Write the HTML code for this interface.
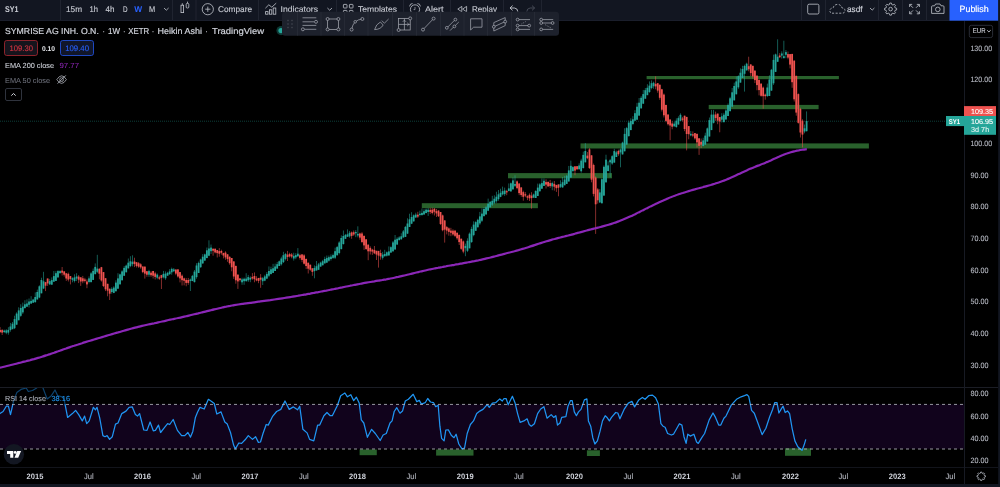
<!DOCTYPE html>
<html><head><meta charset="utf-8"><title>SY1 chart</title>
<style>html,body{margin:0;padding:0;background:#000;overflow:hidden}svg{display:block;will-change:transform;opacity:0.999}</style></head>
<body>
<svg width="1000" height="487" viewBox="0 0 1000 487" font-family="Liberation Sans, sans-serif" text-rendering="geometricPrecision">
<rect width="1000" height="487" fill="#000"/>
<rect x="0" y="404.4" width="964" height="44.4" fill="#12041d"/>
<line x1="0" y1="121.2" x2="946" y2="121.2" stroke="#26a69a" stroke-width="0.7" stroke-dasharray="1 1" opacity="0.55"/>
<rect x="421.8" y="203.2" width="116.1" height="5.0" fill="#2a622d"/>
<rect x="508" y="173.1" width="104.0" height="5.2" fill="#2a622d"/>
<rect x="580.5" y="143.4" width="288.4" height="5.1" fill="#2a622d"/>
<rect x="646.6" y="76.0" width="192.3" height="3.2" fill="#2a622d"/>
<rect x="708.7" y="104.9" width="109.9" height="4.3" fill="#2a622d"/>
<rect x="359.6" y="449.5" width="17.2" height="5.7" fill="#2a622d"/>
<rect x="436.1" y="449.5" width="37.4" height="6.1" fill="#2a622d"/>
<rect x="586.9" y="450.3" width="13.0" height="5.7" fill="#2a622d"/>
<rect x="785" y="448.3" width="26.0" height="7.5" fill="#2a622d"/>
<rect x="-0.37" y="327.1" width="0.9" height="6.0" fill="#ef5350" opacity="0.62"/>
<rect x="1.70" y="329.1" width="0.9" height="5.9" fill="#ef5350" opacity="0.62"/>
<rect x="3.77" y="329.6" width="0.9" height="3.5" fill="#26a69a" opacity="0.62"/>
<rect x="5.83" y="329.2" width="0.9" height="5.0" fill="#26a69a" opacity="0.62"/>
<rect x="7.90" y="327.2" width="0.9" height="7.5" fill="#26a69a" opacity="0.62"/>
<rect x="9.97" y="322.9" width="0.9" height="8.8" fill="#26a69a" opacity="0.62"/>
<rect x="12.04" y="322.0" width="0.9" height="7.2" fill="#26a69a" opacity="0.62"/>
<rect x="14.11" y="315.7" width="0.9" height="13.4" fill="#26a69a" opacity="0.62"/>
<rect x="16.17" y="312.3" width="0.9" height="12.4" fill="#26a69a" opacity="0.62"/>
<rect x="18.24" y="307.3" width="0.9" height="12.9" fill="#26a69a" opacity="0.62"/>
<rect x="20.31" y="304.3" width="0.9" height="12.5" fill="#26a69a" opacity="0.62"/>
<rect x="22.38" y="302.6" width="0.9" height="11.3" fill="#26a69a" opacity="0.62"/>
<rect x="24.45" y="300.2" width="0.9" height="8.6" fill="#26a69a" opacity="0.62"/>
<rect x="26.51" y="299.4" width="0.9" height="7.3" fill="#26a69a" opacity="0.62"/>
<rect x="28.58" y="298.5" width="0.9" height="9.0" fill="#26a69a" opacity="0.62"/>
<rect x="30.65" y="296.2" width="0.9" height="7.3" fill="#26a69a" opacity="0.62"/>
<rect x="32.72" y="298.8" width="0.9" height="4.0" fill="#26a69a" opacity="0.62"/>
<rect x="34.79" y="292.4" width="0.9" height="10.3" fill="#26a69a" opacity="0.62"/>
<rect x="36.85" y="289.6" width="0.9" height="10.0" fill="#26a69a" opacity="0.62"/>
<rect x="38.92" y="285.3" width="0.9" height="12.9" fill="#26a69a" opacity="0.62"/>
<rect x="40.99" y="277.7" width="0.9" height="15.6" fill="#26a69a" opacity="0.62"/>
<rect x="43.06" y="271.8" width="0.9" height="17.3" fill="#26a69a" opacity="0.62"/>
<rect x="45.13" y="281.9" width="0.9" height="9.2" fill="#ef5350" opacity="0.62"/>
<rect x="47.19" y="278.5" width="0.9" height="7.4" fill="#ef5350" opacity="0.62"/>
<rect x="49.26" y="278.9" width="0.9" height="6.2" fill="#26a69a" opacity="0.62"/>
<rect x="51.33" y="277.4" width="0.9" height="7.2" fill="#26a69a" opacity="0.62"/>
<rect x="53.40" y="271.0" width="0.9" height="10.7" fill="#26a69a" opacity="0.62"/>
<rect x="55.47" y="271.1" width="0.9" height="9.9" fill="#26a69a" opacity="0.62"/>
<rect x="57.53" y="270.2" width="0.9" height="7.4" fill="#26a69a" opacity="0.62"/>
<rect x="59.60" y="270.3" width="0.9" height="3.1" fill="#26a69a" opacity="0.62"/>
<rect x="61.67" y="267.0" width="0.9" height="8.5" fill="#ef5350" opacity="0.62"/>
<rect x="63.74" y="271.2" width="0.9" height="5.4" fill="#ef5350" opacity="0.62"/>
<rect x="65.81" y="273.3" width="0.9" height="7.6" fill="#ef5350" opacity="0.62"/>
<rect x="67.87" y="272.6" width="0.9" height="8.9" fill="#ef5350" opacity="0.62"/>
<rect x="69.94" y="276.1" width="0.9" height="8.3" fill="#ef5350" opacity="0.62"/>
<rect x="72.01" y="277.3" width="0.9" height="5.0" fill="#26a69a" opacity="0.62"/>
<rect x="74.08" y="274.3" width="0.9" height="8.2" fill="#26a69a" opacity="0.62"/>
<rect x="76.15" y="273.2" width="0.9" height="7.9" fill="#26a69a" opacity="0.62"/>
<rect x="78.21" y="275.1" width="0.9" height="8.0" fill="#ef5350" opacity="0.62"/>
<rect x="80.28" y="277.3" width="0.9" height="8.6" fill="#ef5350" opacity="0.62"/>
<rect x="82.35" y="275.9" width="0.9" height="7.4" fill="#ef5350" opacity="0.62"/>
<rect x="84.42" y="277.8" width="0.9" height="4.7" fill="#ef5350" opacity="0.62"/>
<rect x="86.49" y="279.3" width="0.9" height="8.9" fill="#ef5350" opacity="0.62"/>
<rect x="88.55" y="276.4" width="0.9" height="7.0" fill="#26a69a" opacity="0.62"/>
<rect x="90.62" y="272.1" width="0.9" height="10.0" fill="#26a69a" opacity="0.62"/>
<rect x="92.69" y="268.5" width="0.9" height="11.5" fill="#26a69a" opacity="0.62"/>
<rect x="94.76" y="263.4" width="0.9" height="10.8" fill="#26a69a" opacity="0.62"/>
<rect x="96.83" y="254.8" width="0.9" height="18.3" fill="#26a69a" opacity="0.62"/>
<rect x="98.89" y="268.2" width="0.9" height="11.1" fill="#ef5350" opacity="0.62"/>
<rect x="100.96" y="266.9" width="0.9" height="14.7" fill="#ef5350" opacity="0.62"/>
<rect x="103.03" y="272.1" width="0.9" height="15.0" fill="#ef5350" opacity="0.62"/>
<rect x="105.10" y="278.2" width="0.9" height="12.9" fill="#ef5350" opacity="0.62"/>
<rect x="107.17" y="283.8" width="0.9" height="12.5" fill="#ef5350" opacity="0.62"/>
<rect x="109.23" y="288.7" width="0.9" height="11.3" fill="#ef5350" opacity="0.62"/>
<rect x="111.30" y="287.2" width="0.9" height="6.5" fill="#26a69a" opacity="0.62"/>
<rect x="113.37" y="286.2" width="0.9" height="7.0" fill="#26a69a" opacity="0.62"/>
<rect x="115.44" y="280.3" width="0.9" height="11.0" fill="#26a69a" opacity="0.62"/>
<rect x="117.51" y="273.2" width="0.9" height="15.5" fill="#26a69a" opacity="0.62"/>
<rect x="119.57" y="273.6" width="0.9" height="11.0" fill="#26a69a" opacity="0.62"/>
<rect x="121.64" y="270.2" width="0.9" height="10.1" fill="#26a69a" opacity="0.62"/>
<rect x="123.71" y="266.1" width="0.9" height="9.6" fill="#26a69a" opacity="0.62"/>
<rect x="125.78" y="264.6" width="0.9" height="7.7" fill="#26a69a" opacity="0.62"/>
<rect x="127.85" y="258.5" width="0.9" height="9.9" fill="#26a69a" opacity="0.62"/>
<rect x="129.91" y="256.2" width="0.9" height="11.0" fill="#26a69a" opacity="0.62"/>
<rect x="131.98" y="255.3" width="0.9" height="11.1" fill="#26a69a" opacity="0.62"/>
<rect x="134.05" y="257.7" width="0.9" height="9.4" fill="#ef5350" opacity="0.62"/>
<rect x="136.12" y="262.2" width="0.9" height="5.3" fill="#ef5350" opacity="0.62"/>
<rect x="138.19" y="262.0" width="0.9" height="5.9" fill="#ef5350" opacity="0.62"/>
<rect x="140.25" y="263.2" width="0.9" height="5.6" fill="#ef5350" opacity="0.62"/>
<rect x="142.32" y="266.5" width="0.9" height="6.7" fill="#ef5350" opacity="0.62"/>
<rect x="144.39" y="266.6" width="0.9" height="12.0" fill="#ef5350" opacity="0.62"/>
<rect x="146.46" y="271.2" width="0.9" height="5.6" fill="#ef5350" opacity="0.62"/>
<rect x="148.53" y="269.8" width="0.9" height="7.1" fill="#26a69a" opacity="0.62"/>
<rect x="150.59" y="271.2" width="0.9" height="5.7" fill="#ef5350" opacity="0.62"/>
<rect x="152.66" y="270.9" width="0.9" height="7.6" fill="#ef5350" opacity="0.62"/>
<rect x="154.73" y="271.8" width="0.9" height="7.7" fill="#ef5350" opacity="0.62"/>
<rect x="156.80" y="273.4" width="0.9" height="5.9" fill="#26a69a" opacity="0.62"/>
<rect x="158.87" y="275.6" width="0.9" height="4.3" fill="#ef5350" opacity="0.62"/>
<rect x="160.93" y="274.8" width="0.9" height="14.2" fill="#ef5350" opacity="0.62"/>
<rect x="163.00" y="270.9" width="0.9" height="7.5" fill="#26a69a" opacity="0.62"/>
<rect x="165.07" y="271.4" width="0.9" height="8.4" fill="#26a69a" opacity="0.62"/>
<rect x="167.14" y="271.8" width="0.9" height="3.8" fill="#26a69a" opacity="0.62"/>
<rect x="169.21" y="269.1" width="0.9" height="5.9" fill="#26a69a" opacity="0.62"/>
<rect x="171.27" y="267.6" width="0.9" height="7.1" fill="#26a69a" opacity="0.62"/>
<rect x="173.34" y="268.0" width="0.9" height="4.1" fill="#26a69a" opacity="0.62"/>
<rect x="175.41" y="269.5" width="0.9" height="5.7" fill="#ef5350" opacity="0.62"/>
<rect x="177.48" y="269.4" width="0.9" height="8.3" fill="#ef5350" opacity="0.62"/>
<rect x="179.55" y="272.1" width="0.9" height="10.3" fill="#ef5350" opacity="0.62"/>
<rect x="181.61" y="274.4" width="0.9" height="11.1" fill="#ef5350" opacity="0.62"/>
<rect x="183.68" y="277.6" width="0.9" height="7.8" fill="#ef5350" opacity="0.62"/>
<rect x="185.75" y="278.1" width="0.9" height="8.2" fill="#ef5350" opacity="0.62"/>
<rect x="187.82" y="277.9" width="0.9" height="6.9" fill="#ef5350" opacity="0.62"/>
<rect x="189.89" y="278.5" width="0.9" height="12.5" fill="#26a69a" opacity="0.62"/>
<rect x="191.95" y="274.9" width="0.9" height="6.1" fill="#26a69a" opacity="0.62"/>
<rect x="194.02" y="270.0" width="0.9" height="12.5" fill="#26a69a" opacity="0.62"/>
<rect x="196.09" y="263.2" width="0.9" height="15.5" fill="#26a69a" opacity="0.62"/>
<rect x="198.16" y="261.6" width="0.9" height="11.4" fill="#26a69a" opacity="0.62"/>
<rect x="200.23" y="258.7" width="0.9" height="9.2" fill="#26a69a" opacity="0.62"/>
<rect x="202.29" y="254.1" width="0.9" height="9.7" fill="#26a69a" opacity="0.62"/>
<rect x="204.36" y="253.6" width="0.9" height="7.5" fill="#26a69a" opacity="0.62"/>
<rect x="206.43" y="247.5" width="0.9" height="10.5" fill="#26a69a" opacity="0.62"/>
<rect x="208.50" y="240.3" width="0.9" height="15.9" fill="#26a69a" opacity="0.62"/>
<rect x="210.57" y="244.5" width="0.9" height="9.5" fill="#26a69a" opacity="0.62"/>
<rect x="212.63" y="248.7" width="0.9" height="7.0" fill="#ef5350" opacity="0.62"/>
<rect x="214.70" y="248.7" width="0.9" height="4.7" fill="#ef5350" opacity="0.62"/>
<rect x="216.77" y="250.1" width="0.9" height="7.4" fill="#ef5350" opacity="0.62"/>
<rect x="218.84" y="248.1" width="0.9" height="8.6" fill="#ef5350" opacity="0.62"/>
<rect x="220.91" y="249.7" width="0.9" height="5.0" fill="#ef5350" opacity="0.62"/>
<rect x="222.97" y="252.9" width="0.9" height="5.5" fill="#ef5350" opacity="0.62"/>
<rect x="225.04" y="251.3" width="0.9" height="8.5" fill="#ef5350" opacity="0.62"/>
<rect x="227.11" y="254.3" width="0.9" height="7.5" fill="#ef5350" opacity="0.62"/>
<rect x="229.18" y="256.4" width="0.9" height="8.3" fill="#ef5350" opacity="0.62"/>
<rect x="231.25" y="258.0" width="0.9" height="13.3" fill="#ef5350" opacity="0.62"/>
<rect x="233.31" y="261.4" width="0.9" height="17.5" fill="#ef5350" opacity="0.62"/>
<rect x="235.38" y="265.7" width="0.9" height="18.0" fill="#ef5350" opacity="0.62"/>
<rect x="237.45" y="274.6" width="0.9" height="14.3" fill="#ef5350" opacity="0.62"/>
<rect x="239.52" y="278.4" width="0.9" height="3.2" fill="#ef5350" opacity="0.62"/>
<rect x="241.59" y="277.7" width="0.9" height="7.1" fill="#26a69a" opacity="0.62"/>
<rect x="243.65" y="277.6" width="0.9" height="7.2" fill="#26a69a" opacity="0.62"/>
<rect x="245.72" y="273.2" width="0.9" height="8.6" fill="#26a69a" opacity="0.62"/>
<rect x="247.79" y="274.9" width="0.9" height="7.1" fill="#26a69a" opacity="0.62"/>
<rect x="249.86" y="276.3" width="0.9" height="5.9" fill="#26a69a" opacity="0.62"/>
<rect x="251.93" y="273.1" width="0.9" height="6.7" fill="#ef5350" opacity="0.62"/>
<rect x="253.99" y="272.4" width="0.9" height="9.9" fill="#ef5350" opacity="0.62"/>
<rect x="256.06" y="276.2" width="0.9" height="5.1" fill="#ef5350" opacity="0.62"/>
<rect x="258.13" y="277.8" width="0.9" height="5.4" fill="#ef5350" opacity="0.62"/>
<rect x="260.20" y="274.1" width="0.9" height="13.7" fill="#ef5350" opacity="0.62"/>
<rect x="262.27" y="277.0" width="0.9" height="8.0" fill="#26a69a" opacity="0.62"/>
<rect x="264.33" y="274.8" width="0.9" height="6.4" fill="#26a69a" opacity="0.62"/>
<rect x="266.40" y="272.0" width="0.9" height="7.1" fill="#26a69a" opacity="0.62"/>
<rect x="268.47" y="266.4" width="0.9" height="10.8" fill="#26a69a" opacity="0.62"/>
<rect x="270.54" y="266.7" width="0.9" height="7.9" fill="#26a69a" opacity="0.62"/>
<rect x="272.61" y="263.8" width="0.9" height="9.1" fill="#26a69a" opacity="0.62"/>
<rect x="274.67" y="263.6" width="0.9" height="7.3" fill="#26a69a" opacity="0.62"/>
<rect x="276.74" y="261.9" width="0.9" height="6.7" fill="#26a69a" opacity="0.62"/>
<rect x="278.81" y="260.5" width="0.9" height="5.5" fill="#26a69a" opacity="0.62"/>
<rect x="280.88" y="256.7" width="0.9" height="8.8" fill="#26a69a" opacity="0.62"/>
<rect x="282.95" y="251.8" width="0.9" height="11.2" fill="#26a69a" opacity="0.62"/>
<rect x="285.01" y="252.9" width="0.9" height="7.5" fill="#26a69a" opacity="0.62"/>
<rect x="287.08" y="250.9" width="0.9" height="10.1" fill="#ef5350" opacity="0.62"/>
<rect x="289.15" y="252.7" width="0.9" height="4.8" fill="#ef5350" opacity="0.62"/>
<rect x="291.22" y="253.0" width="0.9" height="5.3" fill="#ef5350" opacity="0.62"/>
<rect x="293.29" y="252.7" width="0.9" height="7.9" fill="#26a69a" opacity="0.62"/>
<rect x="295.35" y="253.1" width="0.9" height="6.1" fill="#26a69a" opacity="0.62"/>
<rect x="297.42" y="248.1" width="0.9" height="8.9" fill="#26a69a" opacity="0.62"/>
<rect x="299.49" y="253.7" width="0.9" height="5.9" fill="#ef5350" opacity="0.62"/>
<rect x="301.56" y="254.4" width="0.9" height="7.8" fill="#ef5350" opacity="0.62"/>
<rect x="303.63" y="254.2" width="0.9" height="10.3" fill="#ef5350" opacity="0.62"/>
<rect x="305.69" y="258.4" width="0.9" height="10.7" fill="#ef5350" opacity="0.62"/>
<rect x="307.76" y="262.7" width="0.9" height="10.8" fill="#ef5350" opacity="0.62"/>
<rect x="309.83" y="264.7" width="0.9" height="6.1" fill="#ef5350" opacity="0.62"/>
<rect x="311.90" y="268.3" width="0.9" height="7.5" fill="#ef5350" opacity="0.62"/>
<rect x="313.97" y="265.4" width="0.9" height="12.9" fill="#26a69a" opacity="0.62"/>
<rect x="316.03" y="261.0" width="0.9" height="9.5" fill="#26a69a" opacity="0.62"/>
<rect x="318.10" y="262.9" width="0.9" height="6.9" fill="#26a69a" opacity="0.62"/>
<rect x="320.17" y="261.7" width="0.9" height="4.9" fill="#26a69a" opacity="0.62"/>
<rect x="322.24" y="259.9" width="0.9" height="5.4" fill="#26a69a" opacity="0.62"/>
<rect x="324.31" y="256.7" width="0.9" height="6.8" fill="#26a69a" opacity="0.62"/>
<rect x="326.37" y="255.5" width="0.9" height="7.5" fill="#26a69a" opacity="0.62"/>
<rect x="328.44" y="255.5" width="0.9" height="6.2" fill="#26a69a" opacity="0.62"/>
<rect x="330.51" y="254.4" width="0.9" height="6.2" fill="#26a69a" opacity="0.62"/>
<rect x="332.58" y="253.6" width="0.9" height="5.3" fill="#26a69a" opacity="0.62"/>
<rect x="334.65" y="247.6" width="0.9" height="11.4" fill="#26a69a" opacity="0.62"/>
<rect x="336.71" y="245.9" width="0.9" height="9.5" fill="#26a69a" opacity="0.62"/>
<rect x="338.78" y="241.2" width="0.9" height="13.1" fill="#26a69a" opacity="0.62"/>
<rect x="340.85" y="235.4" width="0.9" height="14.0" fill="#26a69a" opacity="0.62"/>
<rect x="342.92" y="230.5" width="0.9" height="14.1" fill="#26a69a" opacity="0.62"/>
<rect x="344.99" y="233.9" width="0.9" height="5.1" fill="#26a69a" opacity="0.62"/>
<rect x="347.05" y="229.4" width="0.9" height="7.4" fill="#26a69a" opacity="0.62"/>
<rect x="349.12" y="230.9" width="0.9" height="6.8" fill="#26a69a" opacity="0.62"/>
<rect x="351.19" y="231.5" width="0.9" height="7.3" fill="#ef5350" opacity="0.62"/>
<rect x="353.26" y="230.5" width="0.9" height="5.4" fill="#ef5350" opacity="0.62"/>
<rect x="355.33" y="230.1" width="0.9" height="7.1" fill="#26a69a" opacity="0.62"/>
<rect x="357.39" y="226.3" width="0.9" height="11.1" fill="#26a69a" opacity="0.62"/>
<rect x="359.46" y="232.7" width="0.9" height="7.0" fill="#ef5350" opacity="0.62"/>
<rect x="361.53" y="232.1" width="0.9" height="11.1" fill="#ef5350" opacity="0.62"/>
<rect x="363.60" y="235.8" width="0.9" height="14.1" fill="#ef5350" opacity="0.62"/>
<rect x="365.67" y="239.3" width="0.9" height="10.6" fill="#ef5350" opacity="0.62"/>
<rect x="367.73" y="244.3" width="0.9" height="15.9" fill="#ef5350" opacity="0.62"/>
<rect x="369.80" y="246.3" width="0.9" height="8.2" fill="#ef5350" opacity="0.62"/>
<rect x="371.87" y="248.8" width="0.9" height="6.1" fill="#ef5350" opacity="0.62"/>
<rect x="373.94" y="246.0" width="0.9" height="8.1" fill="#ef5350" opacity="0.62"/>
<rect x="376.01" y="250.8" width="0.9" height="9.2" fill="#ef5350" opacity="0.62"/>
<rect x="378.07" y="250.9" width="0.9" height="16.7" fill="#ef5350" opacity="0.62"/>
<rect x="380.14" y="249.7" width="0.9" height="10.0" fill="#ef5350" opacity="0.62"/>
<rect x="382.21" y="251.8" width="0.9" height="7.8" fill="#26a69a" opacity="0.62"/>
<rect x="384.28" y="249.8" width="0.9" height="6.8" fill="#26a69a" opacity="0.62"/>
<rect x="386.35" y="251.4" width="0.9" height="5.1" fill="#26a69a" opacity="0.62"/>
<rect x="388.41" y="246.4" width="0.9" height="9.0" fill="#26a69a" opacity="0.62"/>
<rect x="390.48" y="246.3" width="0.9" height="6.3" fill="#26a69a" opacity="0.62"/>
<rect x="392.55" y="241.0" width="0.9" height="11.1" fill="#26a69a" opacity="0.62"/>
<rect x="394.62" y="235.0" width="0.9" height="14.5" fill="#26a69a" opacity="0.62"/>
<rect x="396.69" y="237.2" width="0.9" height="7.4" fill="#26a69a" opacity="0.62"/>
<rect x="398.75" y="236.2" width="0.9" height="4.2" fill="#26a69a" opacity="0.62"/>
<rect x="400.82" y="233.3" width="0.9" height="6.5" fill="#26a69a" opacity="0.62"/>
<rect x="402.89" y="230.0" width="0.9" height="7.5" fill="#26a69a" opacity="0.62"/>
<rect x="404.96" y="225.9" width="0.9" height="11.0" fill="#26a69a" opacity="0.62"/>
<rect x="407.03" y="218.3" width="0.9" height="15.7" fill="#26a69a" opacity="0.62"/>
<rect x="409.09" y="213.7" width="0.9" height="13.3" fill="#26a69a" opacity="0.62"/>
<rect x="411.16" y="212.2" width="0.9" height="11.9" fill="#26a69a" opacity="0.62"/>
<rect x="413.23" y="214.4" width="0.9" height="7.1" fill="#26a69a" opacity="0.62"/>
<rect x="415.30" y="212.7" width="0.9" height="5.1" fill="#26a69a" opacity="0.62"/>
<rect x="417.37" y="211.8" width="0.9" height="6.2" fill="#ef5350" opacity="0.62"/>
<rect x="419.43" y="210.7" width="0.9" height="5.7" fill="#26a69a" opacity="0.62"/>
<rect x="421.50" y="208.5" width="0.9" height="6.6" fill="#26a69a" opacity="0.62"/>
<rect x="423.57" y="209.2" width="0.9" height="5.4" fill="#26a69a" opacity="0.62"/>
<rect x="425.64" y="208.5" width="0.9" height="4.6" fill="#26a69a" opacity="0.62"/>
<rect x="427.71" y="208.0" width="0.9" height="7.9" fill="#26a69a" opacity="0.62"/>
<rect x="429.77" y="207.9" width="0.9" height="6.1" fill="#ef5350" opacity="0.62"/>
<rect x="431.84" y="207.7" width="0.9" height="6.7" fill="#ef5350" opacity="0.62"/>
<rect x="433.91" y="208.0" width="0.9" height="7.5" fill="#ef5350" opacity="0.62"/>
<rect x="435.98" y="209.0" width="0.9" height="8.0" fill="#ef5350" opacity="0.62"/>
<rect x="438.05" y="210.5" width="0.9" height="6.5" fill="#ef5350" opacity="0.62"/>
<rect x="440.11" y="212.0" width="0.9" height="12.9" fill="#ef5350" opacity="0.62"/>
<rect x="442.18" y="214.6" width="0.9" height="16.7" fill="#ef5350" opacity="0.62"/>
<rect x="444.25" y="220.4" width="0.9" height="22.2" fill="#ef5350" opacity="0.62"/>
<rect x="446.32" y="225.9" width="0.9" height="8.5" fill="#ef5350" opacity="0.62"/>
<rect x="448.39" y="227.4" width="0.9" height="8.3" fill="#ef5350" opacity="0.62"/>
<rect x="450.45" y="227.8" width="0.9" height="8.4" fill="#ef5350" opacity="0.62"/>
<rect x="452.52" y="229.3" width="0.9" height="6.4" fill="#ef5350" opacity="0.62"/>
<rect x="454.59" y="229.9" width="0.9" height="7.2" fill="#ef5350" opacity="0.62"/>
<rect x="456.66" y="232.7" width="0.9" height="7.1" fill="#ef5350" opacity="0.62"/>
<rect x="458.73" y="234.8" width="0.9" height="10.2" fill="#ef5350" opacity="0.62"/>
<rect x="460.79" y="238.7" width="0.9" height="11.1" fill="#ef5350" opacity="0.62"/>
<rect x="462.86" y="240.5" width="0.9" height="12.8" fill="#ef5350" opacity="0.62"/>
<rect x="464.93" y="243.6" width="0.9" height="12.6" fill="#26a69a" opacity="0.62"/>
<rect x="467.00" y="238.3" width="0.9" height="13.8" fill="#26a69a" opacity="0.62"/>
<rect x="469.07" y="232.5" width="0.9" height="15.8" fill="#26a69a" opacity="0.62"/>
<rect x="471.13" y="226.7" width="0.9" height="16.1" fill="#26a69a" opacity="0.62"/>
<rect x="473.20" y="221.3" width="0.9" height="15.0" fill="#26a69a" opacity="0.62"/>
<rect x="475.27" y="221.2" width="0.9" height="9.5" fill="#26a69a" opacity="0.62"/>
<rect x="477.34" y="218.7" width="0.9" height="8.6" fill="#26a69a" opacity="0.62"/>
<rect x="479.41" y="211.9" width="0.9" height="13.0" fill="#26a69a" opacity="0.62"/>
<rect x="481.47" y="208.4" width="0.9" height="13.6" fill="#26a69a" opacity="0.62"/>
<rect x="483.54" y="207.2" width="0.9" height="9.0" fill="#26a69a" opacity="0.62"/>
<rect x="485.61" y="205.7" width="0.9" height="8.7" fill="#26a69a" opacity="0.62"/>
<rect x="487.68" y="198.6" width="0.9" height="12.5" fill="#26a69a" opacity="0.62"/>
<rect x="489.75" y="201.0" width="0.9" height="6.5" fill="#26a69a" opacity="0.62"/>
<rect x="491.81" y="195.8" width="0.9" height="10.2" fill="#26a69a" opacity="0.62"/>
<rect x="493.88" y="195.3" width="0.9" height="8.8" fill="#26a69a" opacity="0.62"/>
<rect x="495.95" y="191.7" width="0.9" height="11.0" fill="#26a69a" opacity="0.62"/>
<rect x="498.02" y="190.0" width="0.9" height="10.7" fill="#26a69a" opacity="0.62"/>
<rect x="500.09" y="188.7" width="0.9" height="8.5" fill="#26a69a" opacity="0.62"/>
<rect x="502.15" y="186.6" width="0.9" height="8.8" fill="#26a69a" opacity="0.62"/>
<rect x="504.22" y="187.6" width="0.9" height="8.3" fill="#26a69a" opacity="0.62"/>
<rect x="506.29" y="189.8" width="0.9" height="5.4" fill="#ef5350" opacity="0.62"/>
<rect x="508.36" y="183.4" width="0.9" height="8.0" fill="#26a69a" opacity="0.62"/>
<rect x="510.43" y="182.5" width="0.9" height="9.1" fill="#26a69a" opacity="0.62"/>
<rect x="512.49" y="177.4" width="0.9" height="12.0" fill="#26a69a" opacity="0.62"/>
<rect x="514.56" y="175.3" width="0.9" height="11.7" fill="#26a69a" opacity="0.62"/>
<rect x="516.63" y="180.4" width="0.9" height="8.9" fill="#ef5350" opacity="0.62"/>
<rect x="518.70" y="183.5" width="0.9" height="11.7" fill="#ef5350" opacity="0.62"/>
<rect x="520.77" y="187.4" width="0.9" height="9.4" fill="#ef5350" opacity="0.62"/>
<rect x="522.83" y="190.7" width="0.9" height="10.0" fill="#ef5350" opacity="0.62"/>
<rect x="524.90" y="192.1" width="0.9" height="5.1" fill="#ef5350" opacity="0.62"/>
<rect x="526.97" y="195.3" width="0.9" height="4.8" fill="#ef5350" opacity="0.62"/>
<rect x="529.04" y="193.4" width="0.9" height="7.6" fill="#ef5350" opacity="0.62"/>
<rect x="531.11" y="192.2" width="0.9" height="16.5" fill="#ef5350" opacity="0.62"/>
<rect x="533.17" y="193.6" width="0.9" height="4.1" fill="#26a69a" opacity="0.62"/>
<rect x="535.24" y="190.2" width="0.9" height="7.8" fill="#26a69a" opacity="0.62"/>
<rect x="537.31" y="183.6" width="0.9" height="12.4" fill="#26a69a" opacity="0.62"/>
<rect x="539.38" y="183.1" width="0.9" height="8.7" fill="#26a69a" opacity="0.62"/>
<rect x="541.45" y="178.4" width="0.9" height="10.3" fill="#26a69a" opacity="0.62"/>
<rect x="543.51" y="178.5" width="0.9" height="7.4" fill="#26a69a" opacity="0.62"/>
<rect x="545.58" y="179.3" width="0.9" height="9.2" fill="#ef5350" opacity="0.62"/>
<rect x="547.65" y="181.5" width="0.9" height="5.5" fill="#ef5350" opacity="0.62"/>
<rect x="549.72" y="179.9" width="0.9" height="8.0" fill="#ef5350" opacity="0.62"/>
<rect x="551.79" y="181.6" width="0.9" height="8.6" fill="#26a69a" opacity="0.62"/>
<rect x="553.85" y="181.0" width="0.9" height="9.6" fill="#ef5350" opacity="0.62"/>
<rect x="555.92" y="184.9" width="0.9" height="7.0" fill="#ef5350" opacity="0.62"/>
<rect x="557.99" y="184.2" width="0.9" height="12.1" fill="#ef5350" opacity="0.62"/>
<rect x="560.06" y="180.3" width="0.9" height="7.7" fill="#26a69a" opacity="0.62"/>
<rect x="562.13" y="176.9" width="0.9" height="10.8" fill="#26a69a" opacity="0.62"/>
<rect x="564.19" y="175.8" width="0.9" height="9.4" fill="#26a69a" opacity="0.62"/>
<rect x="566.26" y="174.8" width="0.9" height="9.1" fill="#26a69a" opacity="0.62"/>
<rect x="568.33" y="165.9" width="0.9" height="15.6" fill="#26a69a" opacity="0.62"/>
<rect x="570.40" y="160.6" width="0.9" height="16.9" fill="#26a69a" opacity="0.62"/>
<rect x="572.47" y="166.1" width="0.9" height="6.3" fill="#26a69a" opacity="0.62"/>
<rect x="574.53" y="166.3" width="0.9" height="8.9" fill="#ef5350" opacity="0.62"/>
<rect x="576.60" y="166.2" width="0.9" height="3.9" fill="#ef5350" opacity="0.62"/>
<rect x="578.67" y="163.3" width="0.9" height="6.3" fill="#26a69a" opacity="0.62"/>
<rect x="580.74" y="158.7" width="0.9" height="14.0" fill="#26a69a" opacity="0.62"/>
<rect x="582.81" y="151.6" width="0.9" height="17.0" fill="#26a69a" opacity="0.62"/>
<rect x="584.87" y="143.1" width="0.9" height="19.3" fill="#26a69a" opacity="0.62"/>
<rect x="586.94" y="152.0" width="0.9" height="7.2" fill="#ef5350" opacity="0.62"/>
<rect x="589.01" y="148.2" width="0.9" height="20.7" fill="#ef5350" opacity="0.62"/>
<rect x="591.08" y="155.3" width="0.9" height="27.0" fill="#ef5350" opacity="0.62"/>
<rect x="593.15" y="163.6" width="0.9" height="32.8" fill="#ef5350" opacity="0.62"/>
<rect x="595.21" y="176.4" width="0.9" height="57.5" fill="#ef5350" opacity="0.62"/>
<rect x="597.28" y="188.1" width="0.9" height="15.5" fill="#ef5350" opacity="0.62"/>
<rect x="599.35" y="189.1" width="0.9" height="13.9" fill="#26a69a" opacity="0.62"/>
<rect x="601.42" y="178.3" width="0.9" height="25.0" fill="#26a69a" opacity="0.62"/>
<rect x="603.49" y="165.4" width="0.9" height="30.2" fill="#26a69a" opacity="0.62"/>
<rect x="605.55" y="154.7" width="0.9" height="28.3" fill="#26a69a" opacity="0.62"/>
<rect x="607.62" y="161.3" width="0.9" height="9.8" fill="#26a69a" opacity="0.62"/>
<rect x="609.69" y="158.9" width="0.9" height="18.5" fill="#26a69a" opacity="0.62"/>
<rect x="611.76" y="155.1" width="0.9" height="9.7" fill="#26a69a" opacity="0.62"/>
<rect x="613.83" y="148.8" width="0.9" height="13.8" fill="#26a69a" opacity="0.62"/>
<rect x="615.89" y="150.7" width="0.9" height="6.3" fill="#26a69a" opacity="0.62"/>
<rect x="617.96" y="149.7" width="0.9" height="6.1" fill="#ef5350" opacity="0.62"/>
<rect x="620.03" y="148.4" width="0.9" height="18.9" fill="#26a69a" opacity="0.62"/>
<rect x="622.10" y="141.7" width="0.9" height="12.8" fill="#26a69a" opacity="0.62"/>
<rect x="624.17" y="128.2" width="0.9" height="23.1" fill="#26a69a" opacity="0.62"/>
<rect x="626.23" y="126.9" width="0.9" height="17.7" fill="#26a69a" opacity="0.62"/>
<rect x="628.30" y="120.5" width="0.9" height="16.1" fill="#26a69a" opacity="0.62"/>
<rect x="630.37" y="118.3" width="0.9" height="11.8" fill="#26a69a" opacity="0.62"/>
<rect x="632.44" y="116.2" width="0.9" height="9.0" fill="#26a69a" opacity="0.62"/>
<rect x="634.51" y="110.2" width="0.9" height="10.5" fill="#26a69a" opacity="0.62"/>
<rect x="636.57" y="102.8" width="0.9" height="16.9" fill="#26a69a" opacity="0.62"/>
<rect x="638.64" y="98.0" width="0.9" height="17.7" fill="#26a69a" opacity="0.62"/>
<rect x="640.71" y="96.1" width="0.9" height="12.3" fill="#26a69a" opacity="0.62"/>
<rect x="642.78" y="89.9" width="0.9" height="13.8" fill="#26a69a" opacity="0.62"/>
<rect x="644.85" y="88.0" width="0.9" height="10.7" fill="#26a69a" opacity="0.62"/>
<rect x="646.91" y="84.2" width="0.9" height="10.9" fill="#26a69a" opacity="0.62"/>
<rect x="648.98" y="81.4" width="0.9" height="11.4" fill="#26a69a" opacity="0.62"/>
<rect x="651.05" y="80.4" width="0.9" height="8.9" fill="#26a69a" opacity="0.62"/>
<rect x="653.12" y="81.6" width="0.9" height="7.2" fill="#26a69a" opacity="0.62"/>
<rect x="655.19" y="76.3" width="0.9" height="13.0" fill="#ef5350" opacity="0.62"/>
<rect x="657.25" y="83.2" width="0.9" height="9.5" fill="#ef5350" opacity="0.62"/>
<rect x="659.32" y="84.7" width="0.9" height="15.1" fill="#ef5350" opacity="0.62"/>
<rect x="661.39" y="88.8" width="0.9" height="22.7" fill="#ef5350" opacity="0.62"/>
<rect x="663.46" y="93.5" width="0.9" height="24.0" fill="#ef5350" opacity="0.62"/>
<rect x="665.53" y="104.9" width="0.9" height="17.4" fill="#ef5350" opacity="0.62"/>
<rect x="667.59" y="114.5" width="0.9" height="11.0" fill="#ef5350" opacity="0.62"/>
<rect x="669.66" y="119.5" width="0.9" height="20.7" fill="#ef5350" opacity="0.62"/>
<rect x="671.73" y="121.2" width="0.9" height="8.1" fill="#ef5350" opacity="0.62"/>
<rect x="673.80" y="121.8" width="0.9" height="4.6" fill="#26a69a" opacity="0.62"/>
<rect x="675.87" y="118.3" width="0.9" height="9.5" fill="#26a69a" opacity="0.62"/>
<rect x="677.93" y="116.3" width="0.9" height="8.3" fill="#26a69a" opacity="0.62"/>
<rect x="680.00" y="113.3" width="0.9" height="7.7" fill="#26a69a" opacity="0.62"/>
<rect x="682.07" y="116.8" width="0.9" height="4.6" fill="#ef5350" opacity="0.62"/>
<rect x="684.14" y="115.7" width="0.9" height="15.5" fill="#ef5350" opacity="0.62"/>
<rect x="686.21" y="116.9" width="0.9" height="33.5" fill="#ef5350" opacity="0.62"/>
<rect x="688.27" y="126.1" width="0.9" height="13.2" fill="#ef5350" opacity="0.62"/>
<rect x="690.34" y="131.0" width="0.9" height="5.3" fill="#26a69a" opacity="0.62"/>
<rect x="692.41" y="131.4" width="0.9" height="5.8" fill="#ef5350" opacity="0.62"/>
<rect x="694.48" y="133.1" width="0.9" height="6.6" fill="#ef5350" opacity="0.62"/>
<rect x="696.55" y="133.8" width="0.9" height="13.7" fill="#ef5350" opacity="0.62"/>
<rect x="698.61" y="138.3" width="0.9" height="16.6" fill="#ef5350" opacity="0.62"/>
<rect x="700.68" y="138.5" width="0.9" height="9.6" fill="#ef5350" opacity="0.62"/>
<rect x="702.75" y="137.7" width="0.9" height="8.4" fill="#26a69a" opacity="0.62"/>
<rect x="704.82" y="132.7" width="0.9" height="12.2" fill="#26a69a" opacity="0.62"/>
<rect x="706.89" y="127.5" width="0.9" height="14.1" fill="#26a69a" opacity="0.62"/>
<rect x="708.95" y="117.5" width="0.9" height="19.0" fill="#26a69a" opacity="0.62"/>
<rect x="711.02" y="109.9" width="0.9" height="20.1" fill="#26a69a" opacity="0.62"/>
<rect x="713.09" y="109.9" width="0.9" height="13.6" fill="#26a69a" opacity="0.62"/>
<rect x="715.16" y="111.6" width="0.9" height="9.2" fill="#ef5350" opacity="0.62"/>
<rect x="717.23" y="113.6" width="0.9" height="10.6" fill="#ef5350" opacity="0.62"/>
<rect x="719.29" y="117.1" width="0.9" height="15.2" fill="#ef5350" opacity="0.62"/>
<rect x="721.36" y="113.2" width="0.9" height="9.3" fill="#26a69a" opacity="0.62"/>
<rect x="723.43" y="112.8" width="0.9" height="9.4" fill="#26a69a" opacity="0.62"/>
<rect x="725.50" y="109.2" width="0.9" height="10.8" fill="#26a69a" opacity="0.62"/>
<rect x="727.57" y="103.5" width="0.9" height="12.5" fill="#26a69a" opacity="0.62"/>
<rect x="729.63" y="96.8" width="0.9" height="14.4" fill="#26a69a" opacity="0.62"/>
<rect x="731.70" y="88.0" width="0.9" height="19.1" fill="#26a69a" opacity="0.62"/>
<rect x="733.77" y="82.6" width="0.9" height="17.7" fill="#26a69a" opacity="0.62"/>
<rect x="735.84" y="76.4" width="0.9" height="17.9" fill="#26a69a" opacity="0.62"/>
<rect x="737.91" y="75.3" width="0.9" height="13.5" fill="#26a69a" opacity="0.62"/>
<rect x="739.97" y="68.4" width="0.9" height="14.2" fill="#26a69a" opacity="0.62"/>
<rect x="742.04" y="65.8" width="0.9" height="12.3" fill="#26a69a" opacity="0.62"/>
<rect x="744.11" y="64.7" width="0.9" height="26.9" fill="#26a69a" opacity="0.62"/>
<rect x="746.18" y="62.7" width="0.9" height="7.7" fill="#26a69a" opacity="0.62"/>
<rect x="748.25" y="56.7" width="0.9" height="14.6" fill="#ef5350" opacity="0.62"/>
<rect x="750.31" y="64.0" width="0.9" height="12.0" fill="#ef5350" opacity="0.62"/>
<rect x="752.38" y="65.8" width="0.9" height="12.9" fill="#ef5350" opacity="0.62"/>
<rect x="754.45" y="70.5" width="0.9" height="12.6" fill="#ef5350" opacity="0.62"/>
<rect x="756.52" y="75.6" width="0.9" height="14.7" fill="#ef5350" opacity="0.62"/>
<rect x="758.59" y="79.8" width="0.9" height="15.6" fill="#ef5350" opacity="0.62"/>
<rect x="760.65" y="83.6" width="0.9" height="13.1" fill="#ef5350" opacity="0.62"/>
<rect x="762.72" y="86.5" width="0.9" height="22.2" fill="#ef5350" opacity="0.62"/>
<rect x="764.79" y="93.5" width="0.9" height="6.2" fill="#ef5350" opacity="0.62"/>
<rect x="766.86" y="83.6" width="0.9" height="13.5" fill="#26a69a" opacity="0.62"/>
<rect x="768.93" y="75.3" width="0.9" height="20.7" fill="#26a69a" opacity="0.62"/>
<rect x="770.99" y="68.9" width="0.9" height="21.8" fill="#26a69a" opacity="0.62"/>
<rect x="773.06" y="54.6" width="0.9" height="30.3" fill="#26a69a" opacity="0.62"/>
<rect x="775.13" y="53.6" width="0.9" height="18.3" fill="#26a69a" opacity="0.62"/>
<rect x="777.20" y="39.3" width="0.9" height="22.5" fill="#26a69a" opacity="0.62"/>
<rect x="779.27" y="53.1" width="0.9" height="5.0" fill="#ef5350" opacity="0.62"/>
<rect x="781.33" y="51.3" width="0.9" height="7.3" fill="#26a69a" opacity="0.62"/>
<rect x="783.40" y="40.7" width="0.9" height="17.5" fill="#26a69a" opacity="0.62"/>
<rect x="785.47" y="50.1" width="0.9" height="8.1" fill="#26a69a" opacity="0.62"/>
<rect x="787.54" y="51.5" width="0.9" height="7.8" fill="#ef5350" opacity="0.62"/>
<rect x="789.61" y="54.1" width="0.9" height="14.3" fill="#ef5350" opacity="0.62"/>
<rect x="791.67" y="53.9" width="0.9" height="33.9" fill="#ef5350" opacity="0.62"/>
<rect x="793.74" y="60.6" width="0.9" height="40.9" fill="#ef5350" opacity="0.62"/>
<rect x="795.81" y="75.8" width="0.9" height="39.9" fill="#ef5350" opacity="0.62"/>
<rect x="797.88" y="93.4" width="0.9" height="30.2" fill="#ef5350" opacity="0.62"/>
<rect x="799.95" y="107.7" width="0.9" height="29.8" fill="#ef5350" opacity="0.62"/>
<rect x="802.01" y="119.3" width="0.9" height="28.1" fill="#ef5350" opacity="0.62"/>
<rect x="804.08" y="124.5" width="0.9" height="8.8" fill="#26a69a" opacity="0.62"/>
<rect x="806.15" y="111.4" width="0.9" height="20.0" fill="#26a69a" opacity="0.62"/>
<rect x="-0.82" y="330.0" width="1.8" height="2.0" fill="#ef5350"/>
<rect x="1.25" y="330.1" width="1.8" height="2.5" fill="#ef5350"/>
<rect x="3.32" y="330.6" width="1.8" height="1.4" fill="#26a69a"/>
<rect x="5.38" y="330.4" width="1.8" height="2.3" fill="#26a69a"/>
<rect x="7.45" y="329.9" width="1.8" height="2.7" fill="#26a69a"/>
<rect x="9.52" y="326.5" width="1.8" height="3.5" fill="#26a69a"/>
<rect x="11.59" y="323.7" width="1.8" height="5.5" fill="#26a69a"/>
<rect x="13.66" y="319.1" width="1.8" height="9.1" fill="#26a69a"/>
<rect x="15.72" y="313.6" width="1.8" height="11.1" fill="#26a69a"/>
<rect x="17.79" y="310.4" width="1.8" height="9.9" fill="#26a69a"/>
<rect x="19.86" y="308.0" width="1.8" height="7.8" fill="#26a69a"/>
<rect x="21.93" y="306.6" width="1.8" height="5.8" fill="#26a69a"/>
<rect x="24.00" y="304.3" width="1.8" height="3.7" fill="#26a69a"/>
<rect x="26.06" y="303.5" width="1.8" height="3.2" fill="#26a69a"/>
<rect x="28.13" y="301.5" width="1.8" height="3.3" fill="#26a69a"/>
<rect x="30.20" y="300.9" width="1.8" height="2.7" fill="#26a69a"/>
<rect x="32.27" y="299.6" width="1.8" height="3.1" fill="#26a69a"/>
<rect x="34.34" y="297.0" width="1.8" height="5.1" fill="#26a69a"/>
<rect x="36.40" y="292.0" width="1.8" height="7.4" fill="#26a69a"/>
<rect x="38.47" y="286.3" width="1.8" height="11.2" fill="#26a69a"/>
<rect x="40.54" y="280.0" width="1.8" height="13.3" fill="#26a69a"/>
<rect x="42.61" y="281.3" width="1.8" height="7.2" fill="#26a69a"/>
<rect x="44.68" y="282.2" width="1.8" height="3.5" fill="#ef5350"/>
<rect x="46.74" y="278.5" width="1.8" height="4.9" fill="#ef5350"/>
<rect x="48.81" y="281.1" width="1.8" height="3.2" fill="#26a69a"/>
<rect x="50.88" y="280.1" width="1.8" height="4.6" fill="#26a69a"/>
<rect x="52.95" y="276.1" width="1.8" height="5.6" fill="#26a69a"/>
<rect x="55.02" y="273.2" width="1.8" height="7.7" fill="#26a69a"/>
<rect x="57.08" y="271.1" width="1.8" height="6.3" fill="#26a69a"/>
<rect x="59.15" y="271.1" width="1.8" height="2.1" fill="#26a69a"/>
<rect x="61.22" y="270.6" width="1.8" height="2.1" fill="#ef5350"/>
<rect x="63.29" y="271.4" width="1.8" height="3.3" fill="#ef5350"/>
<rect x="65.36" y="273.3" width="1.8" height="5.2" fill="#ef5350"/>
<rect x="67.42" y="273.9" width="1.8" height="5.7" fill="#ef5350"/>
<rect x="69.49" y="276.1" width="1.8" height="2.8" fill="#ef5350"/>
<rect x="71.56" y="278.2" width="1.8" height="1.6" fill="#26a69a"/>
<rect x="73.63" y="277.4" width="1.8" height="3.6" fill="#26a69a"/>
<rect x="75.70" y="276.5" width="1.8" height="2.1" fill="#26a69a"/>
<rect x="77.76" y="276.6" width="1.8" height="3.1" fill="#ef5350"/>
<rect x="79.83" y="277.3" width="1.8" height="4.2" fill="#ef5350"/>
<rect x="81.90" y="278.3" width="1.8" height="3.0" fill="#ef5350"/>
<rect x="83.97" y="279.5" width="1.8" height="1.4" fill="#ef5350"/>
<rect x="86.04" y="281.5" width="1.8" height="2.9" fill="#ef5350"/>
<rect x="88.10" y="278.4" width="1.8" height="3.6" fill="#26a69a"/>
<rect x="90.17" y="273.4" width="1.8" height="8.8" fill="#26a69a"/>
<rect x="92.24" y="270.9" width="1.8" height="9.0" fill="#26a69a"/>
<rect x="94.31" y="266.9" width="1.8" height="7.3" fill="#26a69a"/>
<rect x="96.38" y="268.6" width="1.8" height="3.2" fill="#26a69a"/>
<rect x="98.44" y="268.8" width="1.8" height="4.9" fill="#ef5350"/>
<rect x="100.51" y="267.2" width="1.8" height="13.3" fill="#ef5350"/>
<rect x="102.58" y="272.1" width="1.8" height="13.9" fill="#ef5350"/>
<rect x="104.65" y="278.2" width="1.8" height="11.1" fill="#ef5350"/>
<rect x="106.72" y="283.8" width="1.8" height="6.9" fill="#ef5350"/>
<rect x="108.78" y="288.7" width="1.8" height="5.0" fill="#ef5350"/>
<rect x="110.85" y="288.8" width="1.8" height="3.2" fill="#26a69a"/>
<rect x="112.92" y="287.6" width="1.8" height="5.3" fill="#26a69a"/>
<rect x="114.99" y="282.6" width="1.8" height="8.7" fill="#26a69a"/>
<rect x="117.06" y="278.4" width="1.8" height="10.3" fill="#26a69a"/>
<rect x="119.12" y="274.4" width="1.8" height="9.9" fill="#26a69a"/>
<rect x="121.19" y="271.4" width="1.8" height="8.9" fill="#26a69a"/>
<rect x="123.26" y="267.9" width="1.8" height="7.9" fill="#26a69a"/>
<rect x="125.33" y="265.6" width="1.8" height="6.7" fill="#26a69a"/>
<rect x="127.40" y="262.7" width="1.8" height="5.7" fill="#26a69a"/>
<rect x="129.46" y="261.3" width="1.8" height="4.8" fill="#26a69a"/>
<rect x="131.53" y="261.7" width="1.8" height="2.5" fill="#26a69a"/>
<rect x="133.60" y="261.5" width="1.8" height="2.5" fill="#ef5350"/>
<rect x="135.67" y="262.2" width="1.8" height="3.8" fill="#ef5350"/>
<rect x="137.74" y="263.2" width="1.8" height="3.5" fill="#ef5350"/>
<rect x="139.80" y="264.3" width="1.8" height="3.1" fill="#ef5350"/>
<rect x="141.87" y="266.5" width="1.8" height="5.6" fill="#ef5350"/>
<rect x="143.94" y="266.6" width="1.8" height="7.0" fill="#ef5350"/>
<rect x="146.01" y="271.2" width="1.8" height="3.5" fill="#ef5350"/>
<rect x="148.08" y="271.1" width="1.8" height="3.6" fill="#26a69a"/>
<rect x="150.14" y="272.7" width="1.8" height="2.5" fill="#ef5350"/>
<rect x="152.21" y="271.0" width="1.8" height="4.7" fill="#ef5350"/>
<rect x="154.28" y="273.4" width="1.8" height="3.5" fill="#ef5350"/>
<rect x="156.35" y="274.6" width="1.8" height="3.1" fill="#26a69a"/>
<rect x="158.42" y="277.3" width="1.8" height="1.4" fill="#ef5350"/>
<rect x="160.48" y="275.1" width="1.8" height="2.8" fill="#ef5350"/>
<rect x="162.55" y="273.9" width="1.8" height="3.4" fill="#26a69a"/>
<rect x="164.62" y="273.6" width="1.8" height="4.7" fill="#26a69a"/>
<rect x="166.69" y="272.8" width="1.8" height="2.9" fill="#26a69a"/>
<rect x="168.76" y="271.4" width="1.8" height="2.7" fill="#26a69a"/>
<rect x="170.82" y="268.9" width="1.8" height="3.4" fill="#26a69a"/>
<rect x="172.89" y="269.4" width="1.8" height="1.8" fill="#26a69a"/>
<rect x="174.96" y="269.5" width="1.8" height="4.1" fill="#ef5350"/>
<rect x="177.03" y="269.4" width="1.8" height="7.1" fill="#ef5350"/>
<rect x="179.10" y="272.1" width="1.8" height="6.3" fill="#ef5350"/>
<rect x="181.16" y="275.7" width="1.8" height="4.5" fill="#ef5350"/>
<rect x="183.23" y="278.4" width="1.8" height="2.4" fill="#ef5350"/>
<rect x="185.30" y="280.0" width="1.8" height="2.9" fill="#ef5350"/>
<rect x="187.37" y="280.0" width="1.8" height="2.9" fill="#ef5350"/>
<rect x="189.44" y="279.5" width="1.8" height="1.4" fill="#26a69a"/>
<rect x="191.50" y="275.9" width="1.8" height="5.2" fill="#26a69a"/>
<rect x="193.57" y="271.6" width="1.8" height="10.5" fill="#26a69a"/>
<rect x="195.64" y="265.5" width="1.8" height="11.6" fill="#26a69a"/>
<rect x="197.71" y="263.0" width="1.8" height="10.0" fill="#26a69a"/>
<rect x="199.78" y="259.5" width="1.8" height="7.7" fill="#26a69a"/>
<rect x="201.84" y="256.7" width="1.8" height="6.7" fill="#26a69a"/>
<rect x="203.91" y="254.4" width="1.8" height="6.1" fill="#26a69a"/>
<rect x="205.98" y="250.3" width="1.8" height="7.8" fill="#26a69a"/>
<rect x="208.05" y="248.5" width="1.8" height="7.2" fill="#26a69a"/>
<rect x="210.12" y="247.6" width="1.8" height="3.6" fill="#26a69a"/>
<rect x="212.18" y="248.7" width="1.8" height="2.0" fill="#ef5350"/>
<rect x="214.25" y="248.7" width="1.8" height="3.7" fill="#ef5350"/>
<rect x="216.32" y="250.1" width="1.8" height="3.0" fill="#ef5350"/>
<rect x="218.39" y="251.1" width="1.8" height="2.6" fill="#ef5350"/>
<rect x="220.46" y="251.0" width="1.8" height="1.8" fill="#ef5350"/>
<rect x="222.52" y="252.9" width="1.8" height="2.6" fill="#ef5350"/>
<rect x="224.59" y="252.6" width="1.8" height="4.8" fill="#ef5350"/>
<rect x="226.66" y="254.3" width="1.8" height="4.8" fill="#ef5350"/>
<rect x="228.73" y="256.8" width="1.8" height="6.4" fill="#ef5350"/>
<rect x="230.80" y="258.0" width="1.8" height="9.3" fill="#ef5350"/>
<rect x="232.86" y="261.4" width="1.8" height="15.1" fill="#ef5350"/>
<rect x="234.93" y="265.9" width="1.8" height="14.4" fill="#ef5350"/>
<rect x="237.00" y="274.6" width="1.8" height="6.8" fill="#ef5350"/>
<rect x="239.07" y="278.4" width="1.8" height="1.7" fill="#ef5350"/>
<rect x="241.14" y="279.4" width="1.8" height="2.9" fill="#26a69a"/>
<rect x="243.20" y="278.8" width="1.8" height="2.4" fill="#26a69a"/>
<rect x="245.27" y="278.6" width="1.8" height="2.5" fill="#26a69a"/>
<rect x="247.34" y="277.1" width="1.8" height="3.2" fill="#26a69a"/>
<rect x="249.41" y="277.8" width="1.8" height="1.8" fill="#26a69a"/>
<rect x="251.48" y="276.9" width="1.8" height="1.6" fill="#ef5350"/>
<rect x="253.54" y="276.0" width="1.8" height="3.2" fill="#ef5350"/>
<rect x="255.61" y="278.6" width="1.8" height="1.8" fill="#ef5350"/>
<rect x="257.68" y="278.0" width="1.8" height="2.9" fill="#ef5350"/>
<rect x="259.75" y="277.6" width="1.8" height="2.1" fill="#ef5350"/>
<rect x="261.82" y="278.2" width="1.8" height="3.0" fill="#26a69a"/>
<rect x="263.88" y="276.4" width="1.8" height="4.2" fill="#26a69a"/>
<rect x="265.95" y="273.9" width="1.8" height="4.7" fill="#26a69a"/>
<rect x="268.02" y="271.0" width="1.8" height="4.7" fill="#26a69a"/>
<rect x="270.09" y="269.3" width="1.8" height="4.7" fill="#26a69a"/>
<rect x="272.16" y="268.3" width="1.8" height="4.6" fill="#26a69a"/>
<rect x="274.22" y="266.5" width="1.8" height="4.5" fill="#26a69a"/>
<rect x="276.29" y="264.2" width="1.8" height="4.4" fill="#26a69a"/>
<rect x="278.36" y="261.3" width="1.8" height="4.7" fill="#26a69a"/>
<rect x="280.43" y="258.5" width="1.8" height="5.8" fill="#26a69a"/>
<rect x="282.50" y="255.2" width="1.8" height="6.9" fill="#26a69a"/>
<rect x="284.56" y="254.0" width="1.8" height="4.9" fill="#26a69a"/>
<rect x="286.63" y="254.6" width="1.8" height="2.4" fill="#ef5350"/>
<rect x="288.70" y="254.1" width="1.8" height="2.3" fill="#ef5350"/>
<rect x="290.77" y="254.5" width="1.8" height="2.1" fill="#ef5350"/>
<rect x="292.84" y="255.9" width="1.8" height="2.6" fill="#26a69a"/>
<rect x="294.90" y="255.1" width="1.8" height="2.3" fill="#26a69a"/>
<rect x="296.97" y="253.7" width="1.8" height="2.5" fill="#26a69a"/>
<rect x="299.04" y="255.2" width="1.8" height="2.7" fill="#ef5350"/>
<rect x="301.11" y="254.4" width="1.8" height="5.5" fill="#ef5350"/>
<rect x="303.18" y="255.4" width="1.8" height="8.3" fill="#ef5350"/>
<rect x="305.24" y="259.0" width="1.8" height="7.0" fill="#ef5350"/>
<rect x="307.31" y="262.7" width="1.8" height="6.0" fill="#ef5350"/>
<rect x="309.38" y="264.7" width="1.8" height="5.0" fill="#ef5350"/>
<rect x="311.45" y="268.3" width="1.8" height="3.6" fill="#ef5350"/>
<rect x="313.52" y="268.0" width="1.8" height="3.1" fill="#26a69a"/>
<rect x="315.58" y="266.2" width="1.8" height="4.3" fill="#26a69a"/>
<rect x="317.65" y="264.4" width="1.8" height="5.4" fill="#26a69a"/>
<rect x="319.72" y="262.6" width="1.8" height="4.0" fill="#26a69a"/>
<rect x="321.79" y="261.2" width="1.8" height="4.1" fill="#26a69a"/>
<rect x="323.86" y="259.0" width="1.8" height="4.4" fill="#26a69a"/>
<rect x="325.92" y="257.9" width="1.8" height="4.7" fill="#26a69a"/>
<rect x="327.99" y="257.2" width="1.8" height="3.5" fill="#26a69a"/>
<rect x="330.06" y="256.6" width="1.8" height="2.4" fill="#26a69a"/>
<rect x="332.13" y="255.1" width="1.8" height="2.8" fill="#26a69a"/>
<rect x="334.20" y="251.2" width="1.8" height="6.5" fill="#26a69a"/>
<rect x="336.26" y="247.1" width="1.8" height="8.2" fill="#26a69a"/>
<rect x="338.33" y="242.5" width="1.8" height="10.5" fill="#26a69a"/>
<rect x="340.40" y="238.0" width="1.8" height="11.1" fill="#26a69a"/>
<rect x="342.47" y="236.0" width="1.8" height="8.0" fill="#26a69a"/>
<rect x="344.54" y="234.9" width="1.8" height="3.9" fill="#26a69a"/>
<rect x="346.60" y="234.3" width="1.8" height="2.5" fill="#26a69a"/>
<rect x="348.67" y="232.8" width="1.8" height="3.6" fill="#26a69a"/>
<rect x="350.74" y="232.4" width="1.8" height="3.5" fill="#ef5350"/>
<rect x="352.81" y="232.3" width="1.8" height="2.2" fill="#ef5350"/>
<rect x="354.88" y="232.0" width="1.8" height="1.3" fill="#26a69a"/>
<rect x="356.94" y="233.9" width="1.8" height="1.6" fill="#26a69a"/>
<rect x="359.01" y="233.5" width="1.8" height="4.1" fill="#ef5350"/>
<rect x="361.08" y="233.5" width="1.8" height="8.5" fill="#ef5350"/>
<rect x="363.15" y="235.8" width="1.8" height="9.6" fill="#ef5350"/>
<rect x="365.22" y="239.3" width="1.8" height="9.7" fill="#ef5350"/>
<rect x="367.28" y="244.7" width="1.8" height="6.6" fill="#ef5350"/>
<rect x="369.35" y="247.9" width="1.8" height="3.5" fill="#ef5350"/>
<rect x="371.42" y="249.6" width="1.8" height="2.0" fill="#ef5350"/>
<rect x="373.49" y="249.9" width="1.8" height="3.4" fill="#ef5350"/>
<rect x="375.56" y="250.8" width="1.8" height="3.7" fill="#ef5350"/>
<rect x="377.62" y="250.9" width="1.8" height="4.7" fill="#ef5350"/>
<rect x="379.69" y="253.0" width="1.8" height="3.4" fill="#ef5350"/>
<rect x="381.76" y="254.6" width="1.8" height="3.2" fill="#26a69a"/>
<rect x="383.83" y="254.0" width="1.8" height="2.2" fill="#26a69a"/>
<rect x="385.90" y="252.3" width="1.8" height="3.4" fill="#26a69a"/>
<rect x="387.96" y="251.4" width="1.8" height="4.1" fill="#26a69a"/>
<rect x="390.03" y="247.2" width="1.8" height="5.4" fill="#26a69a"/>
<rect x="392.10" y="242.4" width="1.8" height="8.8" fill="#26a69a"/>
<rect x="394.17" y="239.7" width="1.8" height="9.8" fill="#26a69a"/>
<rect x="396.24" y="238.8" width="1.8" height="5.8" fill="#26a69a"/>
<rect x="398.30" y="237.5" width="1.8" height="2.6" fill="#26a69a"/>
<rect x="400.37" y="236.3" width="1.8" height="2.9" fill="#26a69a"/>
<rect x="402.44" y="231.4" width="1.8" height="6.1" fill="#26a69a"/>
<rect x="404.51" y="226.9" width="1.8" height="10.0" fill="#26a69a"/>
<rect x="406.58" y="223.5" width="1.8" height="10.1" fill="#26a69a"/>
<rect x="408.64" y="219.3" width="1.8" height="7.7" fill="#26a69a"/>
<rect x="410.71" y="217.0" width="1.8" height="6.7" fill="#26a69a"/>
<rect x="412.78" y="215.3" width="1.8" height="6.1" fill="#26a69a"/>
<rect x="414.85" y="214.6" width="1.8" height="2.9" fill="#26a69a"/>
<rect x="416.92" y="214.7" width="1.8" height="1.9" fill="#ef5350"/>
<rect x="418.98" y="213.7" width="1.8" height="1.3" fill="#26a69a"/>
<rect x="421.05" y="212.9" width="1.8" height="2.3" fill="#26a69a"/>
<rect x="423.12" y="211.2" width="1.8" height="3.3" fill="#26a69a"/>
<rect x="425.19" y="209.7" width="1.8" height="3.4" fill="#26a69a"/>
<rect x="427.26" y="209.8" width="1.8" height="2.2" fill="#26a69a"/>
<rect x="429.32" y="209.9" width="1.8" height="2.0" fill="#ef5350"/>
<rect x="431.39" y="209.7" width="1.8" height="3.3" fill="#ef5350"/>
<rect x="433.46" y="208.8" width="1.8" height="3.0" fill="#ef5350"/>
<rect x="435.53" y="211.1" width="1.8" height="2.3" fill="#ef5350"/>
<rect x="437.60" y="210.5" width="1.8" height="5.7" fill="#ef5350"/>
<rect x="439.66" y="212.0" width="1.8" height="12.0" fill="#ef5350"/>
<rect x="441.73" y="215.4" width="1.8" height="14.8" fill="#ef5350"/>
<rect x="443.80" y="220.4" width="1.8" height="9.2" fill="#ef5350"/>
<rect x="445.87" y="227.1" width="1.8" height="3.5" fill="#ef5350"/>
<rect x="447.94" y="228.4" width="1.8" height="3.5" fill="#ef5350"/>
<rect x="450.00" y="230.6" width="1.8" height="2.2" fill="#ef5350"/>
<rect x="452.07" y="230.7" width="1.8" height="3.7" fill="#ef5350"/>
<rect x="454.14" y="230.7" width="1.8" height="5.1" fill="#ef5350"/>
<rect x="456.21" y="232.7" width="1.8" height="5.6" fill="#ef5350"/>
<rect x="458.28" y="234.8" width="1.8" height="7.3" fill="#ef5350"/>
<rect x="460.34" y="238.7" width="1.8" height="10.1" fill="#ef5350"/>
<rect x="462.41" y="241.4" width="1.8" height="10.2" fill="#ef5350"/>
<rect x="464.48" y="245.9" width="1.8" height="2.3" fill="#26a69a"/>
<rect x="466.55" y="240.8" width="1.8" height="10.0" fill="#26a69a"/>
<rect x="468.62" y="233.7" width="1.8" height="14.6" fill="#26a69a"/>
<rect x="470.68" y="228.9" width="1.8" height="13.2" fill="#26a69a"/>
<rect x="472.75" y="224.6" width="1.8" height="10.5" fill="#26a69a"/>
<rect x="474.82" y="222.1" width="1.8" height="8.7" fill="#26a69a"/>
<rect x="476.89" y="219.8" width="1.8" height="7.5" fill="#26a69a"/>
<rect x="478.96" y="216.4" width="1.8" height="7.0" fill="#26a69a"/>
<rect x="481.02" y="213.6" width="1.8" height="7.1" fill="#26a69a"/>
<rect x="483.09" y="209.0" width="1.8" height="7.2" fill="#26a69a"/>
<rect x="485.16" y="207.3" width="1.8" height="7.2" fill="#26a69a"/>
<rect x="487.23" y="203.8" width="1.8" height="6.9" fill="#26a69a"/>
<rect x="489.30" y="201.9" width="1.8" height="5.4" fill="#26a69a"/>
<rect x="491.36" y="200.8" width="1.8" height="3.9" fill="#26a69a"/>
<rect x="493.43" y="198.7" width="1.8" height="4.0" fill="#26a69a"/>
<rect x="495.50" y="196.7" width="1.8" height="4.4" fill="#26a69a"/>
<rect x="497.57" y="194.3" width="1.8" height="4.8" fill="#26a69a"/>
<rect x="499.64" y="192.8" width="1.8" height="4.1" fill="#26a69a"/>
<rect x="501.70" y="191.1" width="1.8" height="3.3" fill="#26a69a"/>
<rect x="503.77" y="190.5" width="1.8" height="3.6" fill="#26a69a"/>
<rect x="505.84" y="191.1" width="1.8" height="1.3" fill="#ef5350"/>
<rect x="507.91" y="188.4" width="1.8" height="2.6" fill="#26a69a"/>
<rect x="509.98" y="183.3" width="1.8" height="8.1" fill="#26a69a"/>
<rect x="512.04" y="180.4" width="1.8" height="9.0" fill="#26a69a"/>
<rect x="514.11" y="184.0" width="1.8" height="1.8" fill="#26a69a"/>
<rect x="516.18" y="181.4" width="1.8" height="6.7" fill="#ef5350"/>
<rect x="518.25" y="183.5" width="1.8" height="9.6" fill="#ef5350"/>
<rect x="520.32" y="187.4" width="1.8" height="7.6" fill="#ef5350"/>
<rect x="522.38" y="192.1" width="1.8" height="4.7" fill="#ef5350"/>
<rect x="524.45" y="194.2" width="1.8" height="1.4" fill="#ef5350"/>
<rect x="526.52" y="196.2" width="1.8" height="1.4" fill="#ef5350"/>
<rect x="528.59" y="194.8" width="1.8" height="3.5" fill="#ef5350"/>
<rect x="530.66" y="195.6" width="1.8" height="2.5" fill="#ef5350"/>
<rect x="532.72" y="194.5" width="1.8" height="3.2" fill="#26a69a"/>
<rect x="534.79" y="191.0" width="1.8" height="7.0" fill="#26a69a"/>
<rect x="536.86" y="187.6" width="1.8" height="8.4" fill="#26a69a"/>
<rect x="538.93" y="184.4" width="1.8" height="6.8" fill="#26a69a"/>
<rect x="541.00" y="183.1" width="1.8" height="5.6" fill="#26a69a"/>
<rect x="543.06" y="180.8" width="1.8" height="5.1" fill="#26a69a"/>
<rect x="545.13" y="182.1" width="1.8" height="2.5" fill="#ef5350"/>
<rect x="547.20" y="181.9" width="1.8" height="4.4" fill="#ef5350"/>
<rect x="549.27" y="183.1" width="1.8" height="3.0" fill="#ef5350"/>
<rect x="551.34" y="183.1" width="1.8" height="3.3" fill="#26a69a"/>
<rect x="553.40" y="183.9" width="1.8" height="2.8" fill="#ef5350"/>
<rect x="555.47" y="184.9" width="1.8" height="3.3" fill="#ef5350"/>
<rect x="557.54" y="184.5" width="1.8" height="3.3" fill="#ef5350"/>
<rect x="559.61" y="184.1" width="1.8" height="2.7" fill="#26a69a"/>
<rect x="561.68" y="182.2" width="1.8" height="5.2" fill="#26a69a"/>
<rect x="563.74" y="179.5" width="1.8" height="5.8" fill="#26a69a"/>
<rect x="565.81" y="175.7" width="1.8" height="8.2" fill="#26a69a"/>
<rect x="567.88" y="170.4" width="1.8" height="11.1" fill="#26a69a"/>
<rect x="569.95" y="165.8" width="1.8" height="11.8" fill="#26a69a"/>
<rect x="572.02" y="167.1" width="1.8" height="3.9" fill="#26a69a"/>
<rect x="574.08" y="166.3" width="1.8" height="4.3" fill="#ef5350"/>
<rect x="576.15" y="166.2" width="1.8" height="3.0" fill="#ef5350"/>
<rect x="578.22" y="165.5" width="1.8" height="3.7" fill="#26a69a"/>
<rect x="580.29" y="160.6" width="1.8" height="10.6" fill="#26a69a"/>
<rect x="582.36" y="154.9" width="1.8" height="13.1" fill="#26a69a"/>
<rect x="584.42" y="151.0" width="1.8" height="11.3" fill="#26a69a"/>
<rect x="586.49" y="155.6" width="1.8" height="2.5" fill="#ef5350"/>
<rect x="588.56" y="149.4" width="1.8" height="18.7" fill="#ef5350"/>
<rect x="590.63" y="155.3" width="1.8" height="24.4" fill="#ef5350"/>
<rect x="592.70" y="165.0" width="1.8" height="28.9" fill="#ef5350"/>
<rect x="594.76" y="177.6" width="1.8" height="26.7" fill="#ef5350"/>
<rect x="596.83" y="189.4" width="1.8" height="10.9" fill="#ef5350"/>
<rect x="598.90" y="192.4" width="1.8" height="10.0" fill="#26a69a"/>
<rect x="600.97" y="179.2" width="1.8" height="24.1" fill="#26a69a"/>
<rect x="603.04" y="166.8" width="1.8" height="28.8" fill="#26a69a"/>
<rect x="605.10" y="159.6" width="1.8" height="22.6" fill="#26a69a"/>
<rect x="607.17" y="165.4" width="1.8" height="5.7" fill="#26a69a"/>
<rect x="609.24" y="160.2" width="1.8" height="2.1" fill="#26a69a"/>
<rect x="611.31" y="156.2" width="1.8" height="7.3" fill="#26a69a"/>
<rect x="613.38" y="151.1" width="1.8" height="11.5" fill="#26a69a"/>
<rect x="615.44" y="152.3" width="1.8" height="4.7" fill="#26a69a"/>
<rect x="617.51" y="151.0" width="1.8" height="3.2" fill="#ef5350"/>
<rect x="619.58" y="149.5" width="1.8" height="2.9" fill="#26a69a"/>
<rect x="621.65" y="142.6" width="1.8" height="11.8" fill="#26a69a"/>
<rect x="623.72" y="133.9" width="1.8" height="17.4" fill="#26a69a"/>
<rect x="625.78" y="128.1" width="1.8" height="16.5" fill="#26a69a"/>
<rect x="627.85" y="122.6" width="1.8" height="13.5" fill="#26a69a"/>
<rect x="629.92" y="120.9" width="1.8" height="9.2" fill="#26a69a"/>
<rect x="631.99" y="119.3" width="1.8" height="4.7" fill="#26a69a"/>
<rect x="634.06" y="113.2" width="1.8" height="7.5" fill="#26a69a"/>
<rect x="636.12" y="106.7" width="1.8" height="13.0" fill="#26a69a"/>
<rect x="638.19" y="102.7" width="1.8" height="12.9" fill="#26a69a"/>
<rect x="640.26" y="97.8" width="1.8" height="10.6" fill="#26a69a"/>
<rect x="642.33" y="94.1" width="1.8" height="9.6" fill="#26a69a"/>
<rect x="644.40" y="90.2" width="1.8" height="8.5" fill="#26a69a"/>
<rect x="646.46" y="87.8" width="1.8" height="7.4" fill="#26a69a"/>
<rect x="648.53" y="85.6" width="1.8" height="6.4" fill="#26a69a"/>
<rect x="650.60" y="83.2" width="1.8" height="4.8" fill="#26a69a"/>
<rect x="652.67" y="82.8" width="1.8" height="3.5" fill="#26a69a"/>
<rect x="654.74" y="83.9" width="1.8" height="2.5" fill="#ef5350"/>
<rect x="656.80" y="83.2" width="1.8" height="7.4" fill="#ef5350"/>
<rect x="658.87" y="84.7" width="1.8" height="13.1" fill="#ef5350"/>
<rect x="660.94" y="89.3" width="1.8" height="20.4" fill="#ef5350"/>
<rect x="663.01" y="94.6" width="1.8" height="20.7" fill="#ef5350"/>
<rect x="665.08" y="104.9" width="1.8" height="16.0" fill="#ef5350"/>
<rect x="667.14" y="114.5" width="1.8" height="9.7" fill="#ef5350"/>
<rect x="669.21" y="119.5" width="1.8" height="6.0" fill="#ef5350"/>
<rect x="671.28" y="123.5" width="1.8" height="3.2" fill="#ef5350"/>
<rect x="673.35" y="123.7" width="1.8" height="2.7" fill="#26a69a"/>
<rect x="675.42" y="120.7" width="1.8" height="6.3" fill="#26a69a"/>
<rect x="677.48" y="118.1" width="1.8" height="6.4" fill="#26a69a"/>
<rect x="679.55" y="114.8" width="1.8" height="6.0" fill="#26a69a"/>
<rect x="681.62" y="118.5" width="1.8" height="1.3" fill="#ef5350"/>
<rect x="683.69" y="115.7" width="1.8" height="13.3" fill="#ef5350"/>
<rect x="685.76" y="116.9" width="1.8" height="17.1" fill="#ef5350"/>
<rect x="687.82" y="126.1" width="1.8" height="8.1" fill="#ef5350"/>
<rect x="689.89" y="133.8" width="1.8" height="1.6" fill="#26a69a"/>
<rect x="691.96" y="134.3" width="1.8" height="1.3" fill="#ef5350"/>
<rect x="694.03" y="133.1" width="1.8" height="5.3" fill="#ef5350"/>
<rect x="696.10" y="133.8" width="1.8" height="8.6" fill="#ef5350"/>
<rect x="698.16" y="138.3" width="1.8" height="7.6" fill="#ef5350"/>
<rect x="700.23" y="141.8" width="1.8" height="2.8" fill="#ef5350"/>
<rect x="702.30" y="140.4" width="1.8" height="5.7" fill="#26a69a"/>
<rect x="704.37" y="135.6" width="1.8" height="9.0" fill="#26a69a"/>
<rect x="706.44" y="128.4" width="1.8" height="13.2" fill="#26a69a"/>
<rect x="708.50" y="120.1" width="1.8" height="16.4" fill="#26a69a"/>
<rect x="710.57" y="114.6" width="1.8" height="15.5" fill="#26a69a"/>
<rect x="712.64" y="114.6" width="1.8" height="8.3" fill="#26a69a"/>
<rect x="714.71" y="114.5" width="1.8" height="3.5" fill="#ef5350"/>
<rect x="716.78" y="113.6" width="1.8" height="7.0" fill="#ef5350"/>
<rect x="718.84" y="117.1" width="1.8" height="4.4" fill="#ef5350"/>
<rect x="720.91" y="116.3" width="1.8" height="3.4" fill="#26a69a"/>
<rect x="722.98" y="114.7" width="1.8" height="7.5" fill="#26a69a"/>
<rect x="725.05" y="110.5" width="1.8" height="8.9" fill="#26a69a"/>
<rect x="727.12" y="105.1" width="1.8" height="10.9" fill="#26a69a"/>
<rect x="729.18" y="98.3" width="1.8" height="12.9" fill="#26a69a"/>
<rect x="731.25" y="92.3" width="1.8" height="14.3" fill="#26a69a"/>
<rect x="733.32" y="86.0" width="1.8" height="14.4" fill="#26a69a"/>
<rect x="735.39" y="81.4" width="1.8" height="12.9" fill="#26a69a"/>
<rect x="737.46" y="76.1" width="1.8" height="11.2" fill="#26a69a"/>
<rect x="739.52" y="72.7" width="1.8" height="9.9" fill="#26a69a"/>
<rect x="741.59" y="69.0" width="1.8" height="9.0" fill="#26a69a"/>
<rect x="743.66" y="66.0" width="1.8" height="7.8" fill="#26a69a"/>
<rect x="745.73" y="63.7" width="1.8" height="6.7" fill="#26a69a"/>
<rect x="747.80" y="66.2" width="1.8" height="3.1" fill="#ef5350"/>
<rect x="749.86" y="64.5" width="1.8" height="8.6" fill="#ef5350"/>
<rect x="751.93" y="65.8" width="1.8" height="10.6" fill="#ef5350"/>
<rect x="754.00" y="70.6" width="1.8" height="9.5" fill="#ef5350"/>
<rect x="756.07" y="75.6" width="1.8" height="9.5" fill="#ef5350"/>
<rect x="758.14" y="79.8" width="1.8" height="10.3" fill="#ef5350"/>
<rect x="760.20" y="83.6" width="1.8" height="12.2" fill="#ef5350"/>
<rect x="762.27" y="87.6" width="1.8" height="8.6" fill="#ef5350"/>
<rect x="764.34" y="94.6" width="1.8" height="1.6" fill="#ef5350"/>
<rect x="766.41" y="87.5" width="1.8" height="8.5" fill="#26a69a"/>
<rect x="768.48" y="79.5" width="1.8" height="16.5" fill="#26a69a"/>
<rect x="770.54" y="69.8" width="1.8" height="20.8" fill="#26a69a"/>
<rect x="772.61" y="59.9" width="1.8" height="23.4" fill="#26a69a"/>
<rect x="774.68" y="54.4" width="1.8" height="17.5" fill="#26a69a"/>
<rect x="776.75" y="56.7" width="1.8" height="5.1" fill="#26a69a"/>
<rect x="778.82" y="55.5" width="1.8" height="1.7" fill="#ef5350"/>
<rect x="780.88" y="53.5" width="1.8" height="2.1" fill="#26a69a"/>
<rect x="782.95" y="56.2" width="1.8" height="2.0" fill="#26a69a"/>
<rect x="785.02" y="52.1" width="1.8" height="2.7" fill="#26a69a"/>
<rect x="787.09" y="54.1" width="1.8" height="3.5" fill="#ef5350"/>
<rect x="789.16" y="54.1" width="1.8" height="10.5" fill="#ef5350"/>
<rect x="791.22" y="53.9" width="1.8" height="28.3" fill="#ef5350"/>
<rect x="793.29" y="60.6" width="1.8" height="38.7" fill="#ef5350"/>
<rect x="795.36" y="75.8" width="1.8" height="36.8" fill="#ef5350"/>
<rect x="797.43" y="94.1" width="1.8" height="28.7" fill="#ef5350"/>
<rect x="799.50" y="109.0" width="1.8" height="23.5" fill="#ef5350"/>
<rect x="801.56" y="120.7" width="1.8" height="13.9" fill="#ef5350"/>
<rect x="803.63" y="128.3" width="1.8" height="3.2" fill="#26a69a"/>
<rect x="805.70" y="121.0" width="1.8" height="10.2" fill="#26a69a"/>
<path d="M-2.0,368.2C-1.3,368.0 0.7,367.5 2.0,367.2C3.3,366.9 4.7,366.5 6.0,366.2C7.3,365.9 8.7,365.5 10.0,365.2C11.3,364.9 12.7,364.5 14.0,364.2C15.4,363.9 16.7,363.6 18.0,363.2C19.4,362.9 20.7,362.6 22.0,362.2C23.4,361.9 24.7,361.5 26.0,361.2C27.4,360.9 28.7,360.5 30.0,360.2C31.4,359.8 32.7,359.4 34.0,359.1C35.4,358.7 36.7,358.3 38.0,357.9C39.4,357.5 40.7,357.1 42.0,356.7C43.4,356.3 44.7,355.9 46.0,355.4C47.4,355.0 48.7,354.5 50.1,354.1C51.4,353.6 52.7,353.2 54.1,352.7C55.4,352.2 56.7,351.8 58.1,351.3C59.4,350.8 60.7,350.4 62.1,349.9C63.4,349.4 64.7,349.0 66.1,348.5C67.4,348.0 68.7,347.6 70.1,347.1C71.4,346.7 72.7,346.2 74.1,345.8C75.4,345.3 76.7,344.9 78.1,344.5C79.4,344.0 80.7,343.6 82.1,343.2C83.4,342.7 84.8,342.3 86.1,341.9C87.4,341.5 88.8,341.1 90.1,340.7C91.4,340.3 92.8,339.9 94.1,339.5C95.4,339.1 96.8,338.7 98.1,338.3C99.4,337.9 100.8,337.5 102.1,337.1C103.4,336.7 104.8,336.3 106.1,335.9C107.4,335.5 108.8,335.1 110.1,334.7C111.4,334.3 112.8,333.9 114.1,333.5C115.4,333.1 116.8,332.7 118.1,332.4C119.5,332.0 120.8,331.6 122.1,331.2C123.5,330.8 124.8,330.5 126.1,330.1C127.5,329.7 128.8,329.4 130.1,329.0C131.5,328.6 132.8,328.3 134.1,327.9C135.5,327.6 136.8,327.2 138.1,326.9C139.5,326.6 140.8,326.3 142.1,325.9C143.5,325.6 144.8,325.3 146.1,325.0C147.5,324.7 148.8,324.4 150.2,324.1C151.5,323.8 152.8,323.5 154.2,323.3C155.5,323.0 156.8,322.7 158.2,322.4C159.5,322.1 160.8,321.8 162.2,321.5C163.5,321.2 164.8,320.9 166.2,320.6C167.5,320.3 168.8,320.0 170.2,319.7C171.5,319.4 172.8,319.2 174.2,318.9C175.5,318.6 176.8,318.3 178.2,318.0C179.5,317.7 180.8,317.4 182.2,317.1C183.5,316.8 184.9,316.5 186.2,316.2C187.5,315.9 188.9,315.6 190.2,315.2C191.5,314.9 192.9,314.6 194.2,314.3C195.5,314.0 196.9,313.7 198.2,313.4C199.5,313.0 200.9,312.7 202.2,312.4C203.5,312.1 204.9,311.7 206.2,311.4C207.5,311.1 208.9,310.7 210.2,310.4C211.5,310.1 212.9,309.8 214.2,309.4C215.5,309.1 216.9,308.8 218.2,308.5C219.6,308.2 220.9,307.8 222.2,307.5C223.6,307.2 224.9,306.9 226.2,306.7C227.6,306.4 228.9,306.1 230.2,305.9C231.6,305.6 232.9,305.4 234.2,305.1C235.6,304.9 236.9,304.7 238.2,304.5C239.6,304.3 240.9,304.1 242.2,303.9C243.6,303.7 244.9,303.6 246.2,303.4C247.6,303.2 248.9,303.0 250.2,302.8C251.6,302.6 252.9,302.5 254.3,302.3C255.6,302.1 256.9,301.9 258.3,301.7C259.6,301.5 260.9,301.4 262.3,301.2C263.6,301.0 264.9,300.8 266.3,300.6C267.6,300.4 268.9,300.2 270.3,300.1C271.6,299.9 272.9,299.7 274.3,299.5C275.6,299.3 276.9,299.1 278.3,298.9C279.6,298.7 280.9,298.5 282.3,298.3C283.6,298.1 285.0,297.9 286.3,297.7C287.6,297.5 289.0,297.3 290.3,297.1C291.6,296.9 293.0,296.7 294.3,296.4C295.6,296.2 297.0,296.0 298.3,295.7C299.6,295.5 301.0,295.3 302.3,295.0C303.6,294.8 305.0,294.5 306.3,294.3C307.6,294.1 309.0,293.8 310.3,293.6C311.6,293.3 313.0,293.1 314.3,292.8C315.6,292.6 317.0,292.3 318.3,292.1C319.7,291.8 321.0,291.6 322.3,291.3C323.7,291.1 325.0,290.8 326.3,290.6C327.7,290.3 329.0,290.1 330.3,289.8C331.7,289.5 333.0,289.3 334.3,289.0C335.7,288.7 337.0,288.5 338.3,288.2C339.7,287.9 341.0,287.6 342.3,287.4C343.7,287.1 345.0,286.8 346.3,286.5C347.7,286.3 349.0,286.0 350.3,285.7C351.7,285.5 353.0,285.2 354.4,284.9C355.7,284.7 357.0,284.4 358.4,284.2C359.7,283.9 361.0,283.7 362.4,283.4C363.7,283.2 365.0,283.0 366.4,282.7C367.7,282.5 369.0,282.3 370.4,282.0C371.7,281.8 373.0,281.6 374.4,281.4C375.7,281.1 377.0,280.9 378.4,280.7C379.7,280.5 381.0,280.2 382.4,280.0C383.7,279.8 385.0,279.5 386.4,279.3C387.7,279.0 389.1,278.8 390.4,278.5C391.7,278.3 393.1,278.0 394.4,277.7C395.7,277.4 397.1,277.1 398.4,276.9C399.7,276.6 401.1,276.2 402.4,275.9C403.7,275.6 405.1,275.3 406.4,275.0C407.7,274.7 409.1,274.3 410.4,274.0C411.7,273.7 413.1,273.4 414.4,273.0C415.7,272.7 417.1,272.4 418.4,272.1C419.8,271.8 421.1,271.4 422.4,271.1C423.8,270.8 425.1,270.5 426.4,270.2C427.8,269.9 429.1,269.6 430.4,269.3C431.8,269.1 433.1,268.8 434.4,268.5C435.8,268.2 437.1,268.0 438.4,267.7C439.8,267.5 441.1,267.2 442.4,267.0C443.8,266.7 445.1,266.5 446.4,266.2C447.8,266.0 449.1,265.8 450.4,265.5C451.8,265.3 453.1,265.0 454.5,264.8C455.8,264.5 457.1,264.3 458.5,264.1C459.8,263.8 461.1,263.6 462.5,263.3C463.8,263.1 465.1,262.9 466.5,262.6C467.8,262.4 469.1,262.1 470.5,261.9C471.8,261.6 473.1,261.3 474.5,261.1C475.8,260.8 477.1,260.5 478.5,260.3C479.8,260.0 481.1,259.7 482.5,259.4C483.8,259.1 485.1,258.8 486.5,258.4C487.8,258.1 489.2,257.8 490.5,257.5C491.8,257.1 493.2,256.8 494.5,256.5C495.8,256.1 497.2,255.8 498.5,255.4C499.8,255.1 501.2,254.7 502.5,254.4C503.8,254.0 505.2,253.7 506.5,253.3C507.8,253.0 509.2,252.6 510.5,252.3C511.8,251.9 513.2,251.5 514.5,251.2C515.8,250.8 517.2,250.4 518.5,250.1C519.8,249.7 521.2,249.3 522.5,248.9C523.9,248.5 525.2,248.1 526.5,247.7C527.9,247.3 529.2,246.8 530.5,246.4C531.9,246.0 533.2,245.6 534.5,245.1C535.9,244.7 537.2,244.3 538.5,243.8C539.9,243.4 541.2,243.0 542.5,242.5C543.9,242.1 545.2,241.7 546.5,241.3C547.9,240.9 549.2,240.5 550.5,240.1C551.9,239.7 553.2,239.3 554.6,239.0C555.9,238.6 557.2,238.2 558.6,237.9C559.9,237.6 561.2,237.2 562.6,236.9C563.9,236.6 565.2,236.2 566.6,235.9C567.9,235.6 569.2,235.2 570.6,234.9C571.9,234.5 573.2,234.1 574.6,233.8C575.9,233.4 577.2,233.0 578.6,232.7C579.9,232.3 581.2,231.9 582.6,231.6C583.9,231.2 585.2,230.8 586.6,230.5C587.9,230.1 589.3,229.8 590.6,229.5C591.9,229.1 593.3,228.8 594.6,228.5C595.9,228.1 597.3,227.8 598.6,227.5C599.9,227.1 601.3,226.8 602.6,226.4C603.9,226.1 605.3,225.7 606.6,225.3C607.9,224.9 609.3,224.5 610.6,224.1C611.9,223.7 613.3,223.3 614.6,222.8C615.9,222.3 617.3,221.9 618.6,221.4C619.9,220.9 621.3,220.4 622.6,219.8C624.0,219.3 625.3,218.7 626.6,218.1C628.0,217.5 629.3,216.9 630.6,216.3C632.0,215.7 633.3,215.0 634.6,214.4C636.0,213.7 637.3,213.1 638.6,212.4C640.0,211.7 641.3,211.1 642.6,210.4C644.0,209.7 645.3,209.1 646.6,208.4C648.0,207.7 649.3,207.1 650.6,206.4C652.0,205.8 653.3,205.1 654.6,204.5C656.0,203.8 657.3,203.2 658.7,202.5C660.0,201.9 661.3,201.3 662.7,200.7C664.0,200.1 665.3,199.5 666.7,198.9C668.0,198.4 669.3,197.8 670.7,197.3C672.0,196.8 673.3,196.3 674.7,195.8C676.0,195.3 677.3,194.8 678.7,194.3C680.0,193.9 681.3,193.4 682.7,193.0C684.0,192.5 685.3,192.1 686.7,191.7C688.0,191.3 689.4,190.9 690.7,190.5C692.0,190.1 693.4,189.7 694.7,189.4C696.0,189.0 697.4,188.6 698.7,188.3C700.0,187.9 701.4,187.5 702.7,187.2C704.0,186.8 705.4,186.5 706.7,186.1C708.0,185.7 709.4,185.3 710.7,185.0C712.0,184.6 713.4,184.2 714.7,183.8C716.0,183.3 717.4,182.9 718.7,182.5C720.0,182.0 721.4,181.5 722.7,181.0C724.1,180.6 725.4,180.0 726.7,179.5C728.1,178.9 729.4,178.4 730.7,177.8C732.1,177.2 733.4,176.6 734.7,176.0C736.1,175.4 737.4,174.7 738.7,174.1C740.1,173.5 741.4,172.8 742.7,172.2C744.1,171.6 745.4,171.0 746.7,170.4C748.1,169.8 749.4,169.2 750.7,168.6C752.1,168.1 753.4,167.5 754.7,167.0C756.1,166.4 757.4,165.9 758.8,165.4C760.1,164.9 761.4,164.3 762.8,163.8C764.1,163.3 765.4,162.7 766.8,162.1C768.1,161.6 769.4,161.0 770.8,160.4C772.1,159.8 773.4,159.2 774.8,158.6C776.1,157.9 777.4,157.3 778.8,156.7C780.1,156.1 781.4,155.5 782.8,155.0C784.1,154.4 785.4,153.9 786.8,153.5C788.1,153.0 789.4,152.6 790.8,152.2C792.1,151.8 793.5,151.5 794.8,151.2C796.1,150.9 797.5,150.6 798.8,150.4C800.1,150.1 801.5,149.9 802.8,149.7C804.1,149.5 806.1,149.3 806.8,149.2" fill="none" stroke="#8c28b8" stroke-width="2.2" stroke-linecap="butt"/>
<clipPath id="rc"><rect x="0" y="387.5" width="964" height="80"/></clipPath>
<path d="M-2.0,413.6L0.0,413.6L3.1,411.5L6.3,406.2L8.4,406.2L10.5,414.6L13.6,401.0L16.8,392.6L21.0,389.4L26.2,388.0L28.3,391.5L32.5,390.5L36.7,388.0L38.5,384.0L41.5,384.0L43.0,388.0L45.1,393.6L47.2,398.9L51.4,395.7L55.0,390.0L57.7,395.7L61.9,396.8L64.0,398.9L67.6,417.4L72.4,413.6L75.6,410.4L78.7,414.6L82.3,420.9L84.6,416.1L86.7,423.7L89.2,420.9L93.4,407.3L95.5,409.8L97.0,407.3L99.7,417.8L102.9,435.6L105.0,436.7L107.1,435.6L109.6,439.4L112.3,436.7L115.5,424.1L118.0,423.0L121.8,413.6L126.0,411.1L129.1,407.3L132.3,406.9L135.4,414.6L137.5,416.1L139.6,413.6L143.8,430.0L147.0,430.4L150.1,422.0L153.3,430.8L155.4,430.4L158.5,425.1L160.6,432.5L163.8,428.3L167.6,423.7L169.7,424.5L173.2,419.5L177.4,430.4L181.6,435.6L184.8,435.6L187.9,432.5L190.5,437.1L192.8,431.4L195.3,417.8L197.4,412.5L200.0,407.3L204.2,409.0L208.4,399.3L211.6,401.4L214.3,403.5L216.8,414.0L221.0,411.9L224.8,422.0L227.3,424.1L230.5,432.5L233.6,445.1L235.3,448.9L238.8,443.0L241.6,443.4L245.1,439.8L248.3,435.6L252.5,439.4L255.6,436.7L258.4,442.4L260.5,442.0L263.0,433.5L266.2,424.5L268.2,425.1L272.4,416.7L276.6,411.5L280.8,409.4L285.0,401.0L289.2,409.4L293.4,406.9L297.6,409.8L299.7,406.2L302.9,429.3L307.1,432.9L309.6,439.4L313.8,440.9L317.6,425.1L319.7,425.1L323.9,415.7L327.0,412.5L330.2,415.7L332.3,415.7L337.5,405.2L340.7,395.7L344.9,393.0L347.4,396.8L350.8,394.7L353.7,400.6L356.4,397.2L359.2,403.1L361.3,419.9L363.8,423.0L367.4,437.3L371.6,429.3L375.3,433.5L380.2,440.5L383.1,435.0L386.3,433.5L390.0,423.0L392.1,420.9L394.2,411.5L396.8,407.7L399.5,412.5L400.0,413.2L402.5,411.1L405.3,401.0L408.4,399.3L413.2,394.3L416.8,401.6L419.3,400.4L421.4,404.1L425.2,402.7L427.7,398.5L430.5,402.0L433.6,402.7L435.7,406.7L438.2,405.2L439.9,426.2L441.6,438.4L444.1,440.9L445.8,430.0L448.3,429.8L451.5,435.6L454.0,437.7L456.1,434.2L458.8,444.0L462.0,448.9L464.5,448.2L467.2,433.5L470.4,424.5L473.5,420.9L476.7,413.6L479.8,411.1L483.0,409.4L487.2,404.6L489.3,407.3L492.4,403.1L495.6,402.7L499.8,398.9L502.3,401.0L504.0,398.5L506.1,398.5L508.2,404.8L512.4,396.2L515.1,403.1L517.6,413.6L520.1,422.4L523.9,420.9L527.1,418.8L529.2,424.5L531.3,426.2L534.4,423.7L537.6,413.6L540.7,409.0L543.9,406.7L547.0,418.2L551.2,414.6L553.7,417.4L555.8,415.7L557.5,425.1L560.0,423.0L561.7,417.4L565.9,416.7L568.0,406.2L570.5,400.6L572.2,400.6L574.3,411.9L576.4,415.7L578.5,411.9L581.0,409.4L584.4,399.9L586.9,398.9L588.4,420.9L590.7,426.2L592.8,437.7L594.9,444.0L597.4,440.9L600.0,431.4L602.5,420.9L605.2,415.7L607.3,417.8L609.4,420.9L611.5,417.4L615.7,412.5L617.8,413.0L619.9,418.8L624.1,409.4L628.3,403.1L631.9,401.4L634.6,406.9L638.8,399.9L642.4,397.4L645.1,399.3L648.7,395.7L652.5,395.1L655.6,397.8L658.4,404.1L660.9,423.7L663.0,426.2L665.1,427.2L667.6,433.5L671.4,435.0L673.5,434.2L679.4,423.7L681.9,425.1L684.0,436.7L686.1,443.4L687.8,434.2L690.3,436.1L693.9,434.2L696.6,442.0L698.3,443.4L701.8,437.7L704.6,433.5L709.2,419.9L713.0,413.0L715.5,417.4L718.7,425.1L720.8,425.1L723.9,418.2L726.0,416.1L731.2,405.2L736.5,399.3L741.1,396.8L744.5,395.7L747.0,394.7L748.7,396.4L751.6,410.4L754.3,413.2L757.9,423.0L762.1,434.6L765.9,428.3L769.7,416.7L772.6,409.4L774.7,402.7L777.0,402.7L778.9,413.0L781.0,409.4L783.1,406.2L785.2,412.5L787.5,410.9L789.6,413.6L792.1,428.3L794.9,440.9L797.8,446.8L802.0,450.4L804.1,445.1L805.8,439.4" fill="none" stroke="#2196f3" stroke-width="1.25" stroke-linejoin="round" clip-path="url(#rc)"/>
<line x1="0" y1="404.4" x2="964" y2="404.4" stroke="#b4b6bd" stroke-width="0.85" stroke-dasharray="3 3"/>
<line x1="0" y1="449.0" x2="964" y2="449.0" stroke="#b4b6bd" stroke-width="0.85" stroke-dasharray="3 3"/>
<rect x="0" y="387" width="998" height="1" fill="#1c1e26"/>
<rect x="0" y="467" width="998" height="1" fill="#13151c"/>
<rect x="964" y="21" width="1" height="463" fill="#181b24"/>
<text x="970.40" y="50.55" font-size="7.7" font-weight="normal" fill="#b8bbc4" textLength="21.80" lengthAdjust="spacingAndGlyphs"  stroke="#b8bbc4" stroke-width="0.1">130.00</text>
<text x="970.40" y="82.25" font-size="7.7" font-weight="normal" fill="#b8bbc4" textLength="21.80" lengthAdjust="spacingAndGlyphs"  stroke="#b8bbc4" stroke-width="0.1">120.00</text>
<text x="970.40" y="145.95" font-size="7.7" font-weight="normal" fill="#b8bbc4" textLength="21.80" lengthAdjust="spacingAndGlyphs"  stroke="#b8bbc4" stroke-width="0.1">100.00</text>
<text x="970.40" y="177.55" font-size="7.7" font-weight="normal" fill="#b8bbc4" textLength="18.00" lengthAdjust="spacingAndGlyphs"  stroke="#b8bbc4" stroke-width="0.1">90.00</text>
<text x="970.40" y="209.25" font-size="7.7" font-weight="normal" fill="#b8bbc4" textLength="18.00" lengthAdjust="spacingAndGlyphs"  stroke="#b8bbc4" stroke-width="0.1">80.00</text>
<text x="970.40" y="240.85" font-size="7.7" font-weight="normal" fill="#b8bbc4" textLength="18.00" lengthAdjust="spacingAndGlyphs"  stroke="#b8bbc4" stroke-width="0.1">70.00</text>
<text x="970.40" y="272.65" font-size="7.7" font-weight="normal" fill="#b8bbc4" textLength="18.00" lengthAdjust="spacingAndGlyphs"  stroke="#b8bbc4" stroke-width="0.1">60.00</text>
<text x="970.40" y="304.35" font-size="7.7" font-weight="normal" fill="#b8bbc4" textLength="18.00" lengthAdjust="spacingAndGlyphs"  stroke="#b8bbc4" stroke-width="0.1">50.00</text>
<text x="970.40" y="335.95" font-size="7.7" font-weight="normal" fill="#b8bbc4" textLength="18.00" lengthAdjust="spacingAndGlyphs"  stroke="#b8bbc4" stroke-width="0.1">40.00</text>
<text x="970.40" y="367.55" font-size="7.7" font-weight="normal" fill="#b8bbc4" textLength="18.00" lengthAdjust="spacingAndGlyphs"  stroke="#b8bbc4" stroke-width="0.1">30.00</text>
<text x="970.40" y="396.35" font-size="7.7" font-weight="normal" fill="#b8bbc4" textLength="18.00" lengthAdjust="spacingAndGlyphs"  stroke="#b8bbc4" stroke-width="0.1">80.00</text>
<text x="970.40" y="418.55" font-size="7.7" font-weight="normal" fill="#b8bbc4" textLength="18.00" lengthAdjust="spacingAndGlyphs"  stroke="#b8bbc4" stroke-width="0.1">60.00</text>
<text x="970.40" y="440.65" font-size="7.7" font-weight="normal" fill="#b8bbc4" textLength="18.00" lengthAdjust="spacingAndGlyphs"  stroke="#b8bbc4" stroke-width="0.1">40.00</text>
<text x="970.40" y="462.75" font-size="7.7" font-weight="normal" fill="#b8bbc4" textLength="18.00" lengthAdjust="spacingAndGlyphs"  stroke="#b8bbc4" stroke-width="0.1">20.00</text>
<text x="26.60" y="479.20" font-size="7.8" font-weight="bold" fill="#d1d4dc" textLength="16.80" lengthAdjust="spacingAndGlyphs" >2015</text>
<text x="84.00" y="479.20" font-size="7.8" font-weight="normal" fill="#b8bbc4" textLength="9.60" lengthAdjust="spacingAndGlyphs"  stroke="#b8bbc4" stroke-width="0.1">Jul</text>
<text x="134.10" y="479.20" font-size="7.8" font-weight="bold" fill="#d1d4dc" textLength="16.80" lengthAdjust="spacingAndGlyphs" >2016</text>
<text x="191.40" y="479.20" font-size="7.8" font-weight="normal" fill="#b8bbc4" textLength="9.60" lengthAdjust="spacingAndGlyphs"  stroke="#b8bbc4" stroke-width="0.1">Jul</text>
<text x="241.60" y="479.20" font-size="7.8" font-weight="bold" fill="#d1d4dc" textLength="16.80" lengthAdjust="spacingAndGlyphs" >2017</text>
<text x="299.00" y="479.20" font-size="7.8" font-weight="normal" fill="#b8bbc4" textLength="9.60" lengthAdjust="spacingAndGlyphs"  stroke="#b8bbc4" stroke-width="0.1">Jul</text>
<text x="349.10" y="479.20" font-size="7.8" font-weight="bold" fill="#d1d4dc" textLength="16.80" lengthAdjust="spacingAndGlyphs" >2018</text>
<text x="406.50" y="479.20" font-size="7.8" font-weight="normal" fill="#b8bbc4" textLength="9.60" lengthAdjust="spacingAndGlyphs"  stroke="#b8bbc4" stroke-width="0.1">Jul</text>
<text x="456.80" y="479.20" font-size="7.8" font-weight="bold" fill="#d1d4dc" textLength="16.80" lengthAdjust="spacingAndGlyphs" >2019</text>
<text x="514.00" y="479.20" font-size="7.8" font-weight="normal" fill="#b8bbc4" textLength="9.60" lengthAdjust="spacingAndGlyphs"  stroke="#b8bbc4" stroke-width="0.1">Jul</text>
<text x="566.10" y="479.20" font-size="7.8" font-weight="bold" fill="#d1d4dc" textLength="16.80" lengthAdjust="spacingAndGlyphs" >2020</text>
<text x="623.50" y="479.20" font-size="7.8" font-weight="normal" fill="#b8bbc4" textLength="9.60" lengthAdjust="spacingAndGlyphs"  stroke="#b8bbc4" stroke-width="0.1">Jul</text>
<text x="673.60" y="479.20" font-size="7.8" font-weight="bold" fill="#d1d4dc" textLength="16.80" lengthAdjust="spacingAndGlyphs" >2021</text>
<text x="731.00" y="479.20" font-size="7.8" font-weight="normal" fill="#b8bbc4" textLength="9.60" lengthAdjust="spacingAndGlyphs"  stroke="#b8bbc4" stroke-width="0.1">Jul</text>
<text x="782.10" y="479.20" font-size="7.8" font-weight="bold" fill="#d1d4dc" textLength="16.80" lengthAdjust="spacingAndGlyphs" >2022</text>
<text x="838.50" y="479.20" font-size="7.8" font-weight="normal" fill="#b8bbc4" textLength="9.60" lengthAdjust="spacingAndGlyphs"  stroke="#b8bbc4" stroke-width="0.1">Jul</text>
<text x="888.80" y="479.20" font-size="7.8" font-weight="bold" fill="#d1d4dc" textLength="16.80" lengthAdjust="spacingAndGlyphs" >2023</text>
<text x="945.60" y="479.20" font-size="7.8" font-weight="normal" fill="#b8bbc4" textLength="9.60" lengthAdjust="spacingAndGlyphs"  stroke="#b8bbc4" stroke-width="0.1">Jul</text>
<rect x="964" y="106.1" width="32" height="10" fill="#ef5350"/>
<text x="971.00" y="113.70" font-size="7.2" font-weight="normal" fill="#fff" textLength="22.00" lengthAdjust="spacingAndGlyphs"  stroke="#fff" stroke-width="0.1">109.35</text>
<rect x="964" y="116" width="32" height="18.8" fill="#26a69a"/>
<rect x="946" y="116" width="18.2" height="10.1" fill="#26a69a"/>
<text x="948.80" y="123.70" font-size="7" font-weight="bold" fill="#fff" textLength="11.40" lengthAdjust="spacingAndGlyphs" >SY1</text>
<text x="971.00" y="123.80" font-size="7.2" font-weight="normal" fill="#fff" textLength="22.00" lengthAdjust="spacingAndGlyphs"  stroke="#fff" stroke-width="0.1">106.95</text>
<text x="971.00" y="132.00" font-size="7.2" font-weight="normal" fill="#e4f5f3" textLength="18.20" lengthAdjust="spacingAndGlyphs"  stroke="#e4f5f3" stroke-width="0.1">3d 7h</text>
<rect x="969.3" y="25.3" width="23.3" height="12.3" rx="2" fill="#000" stroke="#363a45" stroke-width="0.8"/>
<text x="972.80" y="33.30" font-size="7.2" font-weight="normal" fill="#d1d4dc" textLength="12.80" lengthAdjust="spacingAndGlyphs"  stroke="#d1d4dc" stroke-width="0.1">EUR</text>
<path d="M987.2 30.3 l1.7 1.6 l1.7 -1.6" fill="none" stroke="#d1d4dc" stroke-width="0.9"/>
<path d="M985.46,475.73L985.46,476.87L984.29,477.12L983.97,477.91L984.62,478.91L983.81,479.72L982.81,479.07L982.02,479.39L981.77,480.56L980.63,480.56L980.38,479.39L979.59,479.07L978.59,479.72L977.78,478.91L978.43,477.91L978.11,477.12L976.94,476.87L976.94,475.73L978.11,475.48L978.43,474.69L977.78,473.69L978.59,472.88L979.59,473.53L980.38,473.21L980.63,472.04L981.77,472.04L982.02,473.21L982.81,473.53L983.81,472.88L984.62,473.69L983.97,474.69L984.29,475.48z" fill="none" stroke="#b8bbc4" stroke-width="0.8" stroke-linejoin="round"/>
<circle cx="13.9" cy="454.2" r="10.2" fill="#141823"/>
<path d="M7 451 h6.3 v6.8 h-3.1 v-3.8 h-3.2z M17.2 451 h3.9 l-2.9 6.8 h-3.7z" fill="#fff"/><circle cx="15.2" cy="452.4" r="1.45" fill="#fff"/>
<rect x="2" y="388" width="70.5" height="16" fill="#000" fill-opacity="0.55"/>
<text x="5.00" y="400.60" font-size="7.3" font-weight="normal" fill="#a9acb5" textLength="41.00" lengthAdjust="spacingAndGlyphs"  stroke="#a9acb5" stroke-width="0.1">RSI 14 close</text>
<text x="51.50" y="400.60" font-size="7.3" font-weight="normal" fill="#2196f3" textLength="18.50" lengthAdjust="spacingAndGlyphs"  stroke="#2196f3" stroke-width="0.1">38.16</text>
<text x="5.00" y="34.10" font-size="8.7" font-weight="normal" fill="#d1d4dc" textLength="93.80" lengthAdjust="spacingAndGlyphs"  stroke="#d1d4dc" stroke-width="0.2">SYMRISE AG INH. O.N.</text>
<text x="102.80" y="34.10" font-size="8.7" font-weight="normal" fill="#d1d4dc" textLength="2.00" lengthAdjust="spacingAndGlyphs"  stroke="#d1d4dc" stroke-width="0.2">·</text>
<text x="108.00" y="34.10" font-size="8.7" font-weight="normal" fill="#d1d4dc" textLength="12.00" lengthAdjust="spacingAndGlyphs"  stroke="#d1d4dc" stroke-width="0.2">1W</text>
<text x="123.30" y="34.10" font-size="8.7" font-weight="normal" fill="#d1d4dc" textLength="2.00" lengthAdjust="spacingAndGlyphs"  stroke="#d1d4dc" stroke-width="0.2">·</text>
<text x="128.30" y="34.10" font-size="8.7" font-weight="normal" fill="#d1d4dc" textLength="21.00" lengthAdjust="spacingAndGlyphs"  stroke="#d1d4dc" stroke-width="0.2">XETR</text>
<text x="152.00" y="34.10" font-size="8.7" font-weight="normal" fill="#d1d4dc" textLength="2.00" lengthAdjust="spacingAndGlyphs"  stroke="#d1d4dc" stroke-width="0.2">·</text>
<text x="157.50" y="34.10" font-size="8.7" font-weight="normal" fill="#d1d4dc" textLength="44.50" lengthAdjust="spacingAndGlyphs"  stroke="#d1d4dc" stroke-width="0.2">Heikin Ashi</text>
<text x="205.50" y="34.10" font-size="8.7" font-weight="normal" fill="#d1d4dc" textLength="2.00" lengthAdjust="spacingAndGlyphs"  stroke="#d1d4dc" stroke-width="0.2">·</text>
<text x="212.00" y="34.10" font-size="8.7" font-weight="normal" fill="#d1d4dc" textLength="52.00" lengthAdjust="spacingAndGlyphs"  stroke="#d1d4dc" stroke-width="0.2">TradingView</text>
<circle cx="281" cy="30.6" r="4.6" fill="#0f3a36"/><circle cx="281" cy="30.6" r="2.6" fill="#26a69a"/>
<rect x="4.5" y="40.5" width="33" height="15" rx="2.2" fill="#16151d" stroke="#9c2730" stroke-width="0.9"/>
<text x="9.60" y="50.90" font-size="8" font-weight="normal" fill="#d63643" textLength="23.40" lengthAdjust="spacingAndGlyphs"  stroke="#d63643" stroke-width="0.1">109.30</text>
<text x="42.00" y="50.60" font-size="6.9" font-weight="bold" fill="#e8eaee" textLength="13.00" lengthAdjust="spacingAndGlyphs" >0.10</text>
<rect x="60.5" y="40.5" width="33" height="15" rx="2.2" fill="#12172a" stroke="#2350d6" stroke-width="0.9"/>
<text x="65.20" y="50.90" font-size="8" font-weight="normal" fill="#2962ff" textLength="23.80" lengthAdjust="spacingAndGlyphs"  stroke="#2962ff" stroke-width="0.1">109.40</text>
<text x="5.00" y="67.60" font-size="7.3" font-weight="normal" fill="#d1d4dc" textLength="49.00" lengthAdjust="spacingAndGlyphs"  stroke="#d1d4dc" stroke-width="0.08">EMA 200 close</text>
<text x="59.50" y="67.60" font-size="7.3" font-weight="normal" fill="#8a27b0" textLength="19.50" lengthAdjust="spacingAndGlyphs"  stroke="#8a27b0" stroke-width="0.08">97.77</text>
<text x="5.00" y="82.60" font-size="7.3" font-weight="normal" fill="#70737e" textLength="45.00" lengthAdjust="spacingAndGlyphs"  stroke="#70737e" stroke-width="0.05">EMA 50 close</text>
<g fill="none" stroke="#aeb1ba" stroke-width="0.8"><path d="M56.8 79.6 q4.8 -7.6 9.6 0 q-4.8 7.6 -9.6 0z"/><circle cx="61.6" cy="79.6" r="1.9"/><path d="M57.6 83.6 L65.8 75.4" stroke-width="0.9"/></g>
<rect x="5.5" y="88.5" width="16" height="12" rx="1.5" fill="none" stroke="#363a45" stroke-width="0.9"/>
<path d="M11.3 95.6 l2.2 -2.1 l2.2 2.1" fill="none" stroke="#d1d4dc" stroke-width="1"/>
<rect x="0" y="0" width="1000" height="20.4" fill="#131722"/>
<rect x="0" y="20" width="1000" height="0.9" fill="#1f2330"/>
<rect x="60.1" y="0" width="0.8" height="20" fill="#262a35"/>
<rect x="172.1" y="0" width="0.8" height="20" fill="#262a35"/>
<rect x="195.6" y="0" width="0.8" height="20" fill="#262a35"/>
<rect x="258.1" y="0" width="0.8" height="20" fill="#262a35"/>
<rect x="336.1" y="0" width="0.8" height="20" fill="#262a35"/>
<rect x="403.1" y="0" width="0.8" height="20" fill="#262a35"/>
<rect x="450.1" y="0" width="0.8" height="20" fill="#262a35"/>
<rect x="503.1" y="0" width="0.8" height="20" fill="#262a35"/>
<rect x="541.1" y="0" width="0.8" height="20" fill="#262a35"/>
<rect x="801.1" y="0" width="0.8" height="20" fill="#262a35"/>
<rect x="825.1" y="0" width="0.8" height="20" fill="#262a35"/>
<rect x="878.1" y="0" width="0.8" height="20" fill="#262a35"/>
<rect x="902.1" y="0" width="0.8" height="20" fill="#262a35"/>
<rect x="926.1" y="0" width="0.8" height="20" fill="#262a35"/>
<text x="5.00" y="12.10" font-size="8.4" font-weight="bold" fill="#d1d4dc" textLength="13.50" lengthAdjust="spacingAndGlyphs" >SY1</text>
<text x="66.00" y="12.10" font-size="8.4" font-weight="normal" fill="#c9ccd4" textLength="16.00" lengthAdjust="spacingAndGlyphs"  stroke="#c9ccd4" stroke-width="0.13">15m</text>
<text x="89.50" y="12.10" font-size="8.4" font-weight="normal" fill="#c9ccd4" textLength="8.50" lengthAdjust="spacingAndGlyphs"  stroke="#c9ccd4" stroke-width="0.13">1h</text>
<text x="105.50" y="12.10" font-size="8.4" font-weight="normal" fill="#c9ccd4" textLength="9.00" lengthAdjust="spacingAndGlyphs"  stroke="#c9ccd4" stroke-width="0.13">4h</text>
<text x="123.00" y="12.10" font-size="8.4" font-weight="normal" fill="#c9ccd4" textLength="4.60" lengthAdjust="spacingAndGlyphs"  stroke="#c9ccd4" stroke-width="0.13">D</text>
<text x="134.30" y="12.10" font-size="8.4" font-weight="bold" fill="#2962ff" textLength="7.90" lengthAdjust="spacingAndGlyphs" >W</text>
<text x="149.00" y="12.10" font-size="8.4" font-weight="normal" fill="#c9ccd4" textLength="6.20" lengthAdjust="spacingAndGlyphs"  stroke="#c9ccd4" stroke-width="0.13">M</text>
<path d="M164 8 l2.3 2.2 l2.3 -2.2" fill="none" stroke="#c3c6ce" stroke-width="0.8"/>
<g fill="none" stroke="#c3c6ce" stroke-width="0.8"><rect x="181" y="5.2" width="2.6" height="7.4"/><path d="M182.3 3.2v2M182.3 12.6v0"/><rect x="186.2" y="3.4" width="2.6" height="4.6" rx="1"/><path d="M187.5 1.6v1.8"/></g>
<g fill="none" stroke="#c3c6ce" stroke-width="0.8"><circle cx="207.8" cy="9.2" r="5.6"/><path d="M207.8 6.6v5.2M205.2 9.2h5.2"/></g>
<text x="218.00" y="12.10" font-size="8.4" font-weight="normal" fill="#c9ccd4" textLength="34.00" lengthAdjust="spacingAndGlyphs"  stroke="#c9ccd4" stroke-width="0.13">Compare</text>
<g fill="none" stroke="#c3c6ce" stroke-width="0.8"><path d="M265.4 8.2 l3.4 -3.4 l3 2.4 l4.4 -4"/><rect x="265.6" y="11.6" width="2.4" height="2.6"/><rect x="269.4" y="9.8" width="2.4" height="4.4"/><rect x="273.2" y="8" width="2.6" height="6.2"/></g>
<text x="280.50" y="12.10" font-size="8.4" font-weight="normal" fill="#c9ccd4" textLength="37.50" lengthAdjust="spacingAndGlyphs"  stroke="#c9ccd4" stroke-width="0.13">Indicators</text>
<path d="M327.4 8 l2.3 2.2 l2.3 -2.2" fill="none" stroke="#c3c6ce" stroke-width="0.8"/>
<g fill="none" stroke="#c3c6ce" stroke-width="0.8"><rect x="343.4" y="4.4" width="3.6" height="3.6" rx="0.6"/><rect x="349.4" y="4.4" width="3.6" height="3.6" rx="0.6"/><rect x="343.4" y="10.4" width="3.6" height="3.6" rx="0.6"/><rect x="349.4" y="10.4" width="3.6" height="3.6" rx="0.6"/></g>
<text x="358.00" y="12.10" font-size="8.4" font-weight="normal" fill="#c9ccd4" textLength="39.00" lengthAdjust="spacingAndGlyphs"  stroke="#c9ccd4" stroke-width="0.13">Templates</text>
<g fill="none" stroke="#c3c6ce" stroke-width="0.8"><circle cx="415" cy="9.4" r="4.6"/><path d="M409.6 6.4 q0.4 -3 3 -2.8M420.4 6.4 q-0.4 -3 -3 -2.8"/><path d="M415 7v2.6h-1.4" stroke-width="0.6"/></g>
<text x="425.00" y="12.10" font-size="8.4" font-weight="normal" fill="#c9ccd4" textLength="18.60" lengthAdjust="spacingAndGlyphs"  stroke="#c9ccd4" stroke-width="0.13">Alert</text>
<g fill="none" stroke="#c3c6ce" stroke-width="0.8" stroke-linejoin="round"><path d="M461.8 6.4 v5.4 l-4 -2.7z"/><path d="M466.6 6.4 v5.4 l-4 -2.7z"/></g>
<text x="472.00" y="12.10" font-size="8.4" font-weight="normal" fill="#c9ccd4" textLength="25.00" lengthAdjust="spacingAndGlyphs"  stroke="#c9ccd4" stroke-width="0.13">Replay</text>
<g fill="none" stroke="#c3c6ce" stroke-width="0.9"><path d="M512.6 5.6 l-2.6 2.4 l2.6 2.4M510 8 h4.4 q3.2 0.2 3.4 3.6"/></g>
<g fill="none" stroke="#4c505c" stroke-width="0.9"><path d="M532 5.6 l2.6 2.4 l-2.6 2.4M534.6 8 h-4.4 q-3.2 0.2 -3.4 3.6"/></g>
<rect x="807.7" y="4.2" width="11.2" height="9.8" rx="1.4" fill="none" stroke="#c3c6ce" stroke-width="0.8"/>
<path d="M832 13.2 h10.4 q2.8 -0.4 2.6 -2.8 q-0.4 -2.4 -3 -2.4 q-1 -3.6 -4.6 -3.6 q-3.4 0.2 -4.2 3.4 q-3.2 0.4 -3.4 2.8 q0 2.2 2.2 2.6z" fill="none" stroke="#c3c6ce" stroke-width="0.8" stroke-dasharray="2.1 1.5"/>
<text x="847.00" y="12.10" font-size="8.4" font-weight="normal" fill="#d1d4dc" textLength="15.60" lengthAdjust="spacingAndGlyphs"  stroke="#d1d4dc" stroke-width="0.15">asdf</text>
<path d="M870 8 l2.2 2.1 l2.2 -2.1" fill="none" stroke="#c3c6ce" stroke-width="0.8"/>
<circle cx="890.6" cy="9.1" r="1.8" fill="none" stroke="#c3c6ce" stroke-width="0.8"/><path d="M896.65,8.29L896.65,9.91L895.14,10.30L894.66,11.46L895.45,12.80L894.30,13.95L892.96,13.16L891.80,13.64L891.41,15.15L889.79,15.15L889.40,13.64L888.24,13.16L886.90,13.95L885.75,12.80L886.54,11.46L886.06,10.30L884.55,9.91L884.55,8.29L886.06,7.90L886.54,6.74L885.75,5.40L886.90,4.25L888.24,5.04L889.40,4.56L889.79,3.05L891.41,3.05L891.80,4.56L892.96,5.04L894.30,4.25L895.45,5.40L894.66,6.74L895.14,7.90z" fill="none" stroke="#c3c6ce" stroke-width="0.8" stroke-linejoin="round"/>
<g fill="none" stroke="#c3c6ce" stroke-width="0.8"><path d="M909.6 7 v-2.6 h2.6M909.8 4.6 l3.2 3.2M919.4 7 v-2.6 h-2.6M919.2 4.6 l-3.2 3.2M909.6 11.2 v2.6 h2.6M909.8 13.6 l3.2 -3.2M919.4 11.2 v2.6 h-2.6M919.2 13.6 l-3.2 -3.2"/></g>
<g fill="none" stroke="#c3c6ce" stroke-width="0.8"><path d="M931.6 13.4 v-6.6 q0 -1 1 -1 h2 l1 -1.8 h4.4 l1 1.8 h2 q1 0 1 1 v6.6z"/><circle cx="937.8" cy="9.4" r="2.3"/></g>
<rect x="949.5" y="0" width="49" height="20.6" fill="#2962ff"/>
<text x="959.60" y="12.40" font-size="9" font-weight="normal" fill="#fff" textLength="29.00" lengthAdjust="spacingAndGlyphs"  stroke="#fff" stroke-width="0.2">Publish</text>
<rect x="282" y="11.8" width="277" height="24" rx="3.2" fill="#1e222d"/>
<rect x="297.1" y="12" width="0.8" height="23.6" fill="#2a2e39"/>
<rect x="320.6" y="12" width="0.8" height="23.6" fill="#2a2e39"/>
<rect x="344.1" y="12" width="0.8" height="23.6" fill="#2a2e39"/>
<rect x="367.6" y="12" width="0.8" height="23.6" fill="#2a2e39"/>
<rect x="392.1" y="12" width="0.8" height="23.6" fill="#2a2e39"/>
<rect x="416.1" y="12" width="0.8" height="23.6" fill="#2a2e39"/>
<rect x="440.1" y="12" width="0.8" height="23.6" fill="#2a2e39"/>
<rect x="463.6" y="12" width="0.8" height="23.6" fill="#2a2e39"/>
<rect x="487.1" y="12" width="0.8" height="23.6" fill="#2a2e39"/>
<rect x="511.1" y="12" width="0.8" height="23.6" fill="#2a2e39"/>
<rect x="534.1" y="12" width="0.8" height="23.6" fill="#2a2e39"/>
<rect x="287.3" y="19.8" width="1.4" height="1.4" fill="#434651"/>
<rect x="287.3" y="23.3" width="1.4" height="1.4" fill="#434651"/>
<rect x="287.3" y="26.8" width="1.4" height="1.4" fill="#434651"/>
<rect x="291.3" y="19.8" width="1.4" height="1.4" fill="#434651"/>
<rect x="291.3" y="23.3" width="1.4" height="1.4" fill="#434651"/>
<rect x="291.3" y="26.8" width="1.4" height="1.4" fill="#434651"/>
<g fill="none" stroke="#a9acb5" stroke-width="0.72"><path d="M302.5 17.8h13.8M302.5 21.8h11.6M302.5 25.4h13.8M304.4 29.3h11.9"/><circle cx="316" cy="21.8" r="1.5" fill="#1e222d"/><circle cx="302.9" cy="29.3" r="1.5" fill="#1e222d"/></g>
<g fill="none" stroke="#a9acb5" stroke-width="0.72"><rect x="327.6" y="19" width="10.8" height="10.4"/><circle cx="327.6" cy="19" r="1.5" fill="#1e222d"/><circle cx="338.4" cy="19" r="1.5" fill="#1e222d"/><circle cx="327.6" cy="29.4" r="1.5" fill="#1e222d"/><circle cx="338.4" cy="29.4" r="1.5" fill="#1e222d"/></g>
<g fill="none" stroke="#a9acb5" stroke-width="0.72"><path d="M351.6 29.4 q1 -5 3.4 -7.4 q3 -2.6 7.4 -3"/><circle cx="351.6" cy="29.6" r="1.5" fill="#1e222d"/><circle cx="355.2" cy="21.8" r="1.3" fill="#1e222d"/><circle cx="362.4" cy="19" r="1.5" fill="#1e222d"/></g>
<g fill="none" stroke="#a9acb5" stroke-width="0.72"><path d="M374.6 29.6 q1.4 -5.4 5.8 -7.6 l2.8 3 q-2.4 4.4 -8.6 4.6z M381.8 20.6 l2.6 2.6 l4.2 -4.2"/></g>
<g fill="none" stroke="#a9acb5" stroke-width="0.72"><rect x="398.6" y="18.6" width="11.6" height="11.4"/><path d="M404.4 18.6v11.4M398.6 24.4h11.6M402.8 21.8l1.6-1.7l1.6 1.7M407.2 22.8l1.7 1.6l-1.7 1.6"/><circle cx="410.2" cy="18.4" r="1.5" fill="#1e222d"/><circle cx="398.6" cy="30" r="1.5" fill="#1e222d"/></g>
<g fill="none" stroke="#a9acb5" stroke-width="0.72"><path d="M424 28.6 L432.6 19.6"/><circle cx="423" cy="29.6" r="1.5"/><circle cx="433.6" cy="18.6" r="1.5"/></g>
<g fill="none" stroke="#a9acb5" stroke-width="0.72"><path d="M447.8 27 L454.4 20.4M450 30.6 l3.4 -3.4M455.4 25.4 l3.4 -3.4"/><circle cx="446.8" cy="27.8" r="1.4"/><circle cx="455.4" cy="19.6" r="1.4"/><circle cx="454.4" cy="26.4" r="1.4"/></g>
<g fill="none" stroke="#a9acb5" stroke-width="0.72"><path d="M470.6 18.8 h11.4 v8.4 h-8.4 l-3 2.8z"/></g>
<g fill="none" stroke="#a9acb5" stroke-width="0.72"><path d="M493.8 22.6 l11.4 -5 v8 l-11.4 5.4z M493.8 26.8 l11.4 -5.2"/><circle cx="493.8" cy="26.8" r="1.4" fill="#1e222d"/><circle cx="505.2" cy="21.6" r="1.4" fill="#1e222d"/></g>
<g fill="none" stroke="#a9acb5" stroke-width="0.72"><path d="M519 19.6h11M519 25.6h9M519 29.4h11"/><path d="M521.4 24l5-2.8" stroke-dasharray="1 1" stroke-width="0.6"/><circle cx="517.6" cy="19.6" r="1.4"/><circle cx="517.6" cy="25.6" r="1.4"/><circle cx="529.2" cy="25.6" r="1.4"/><circle cx="517.6" cy="29.4" r="1.4"/></g>
<g fill="none" stroke="#a9acb5" stroke-width="0.72"><path d="M542.6 19.6h10.6M542.6 23h8.6M542.6 29.4h10.6"/><path d="M545 24.6l6 3.4" stroke-dasharray="1 1" stroke-width="0.6"/><circle cx="541.2" cy="19.6" r="1.4"/><circle cx="541.2" cy="23" r="1.4"/><circle cx="552.6" cy="23" r="1.4"/><circle cx="541.2" cy="29.4" r="1.4"/></g>
<rect x="998.2" y="0" width="2" height="487" fill="#131722"/>
<rect x="0" y="484" width="1000" height="3" fill="#131722"/>
</svg>
</body></html>
